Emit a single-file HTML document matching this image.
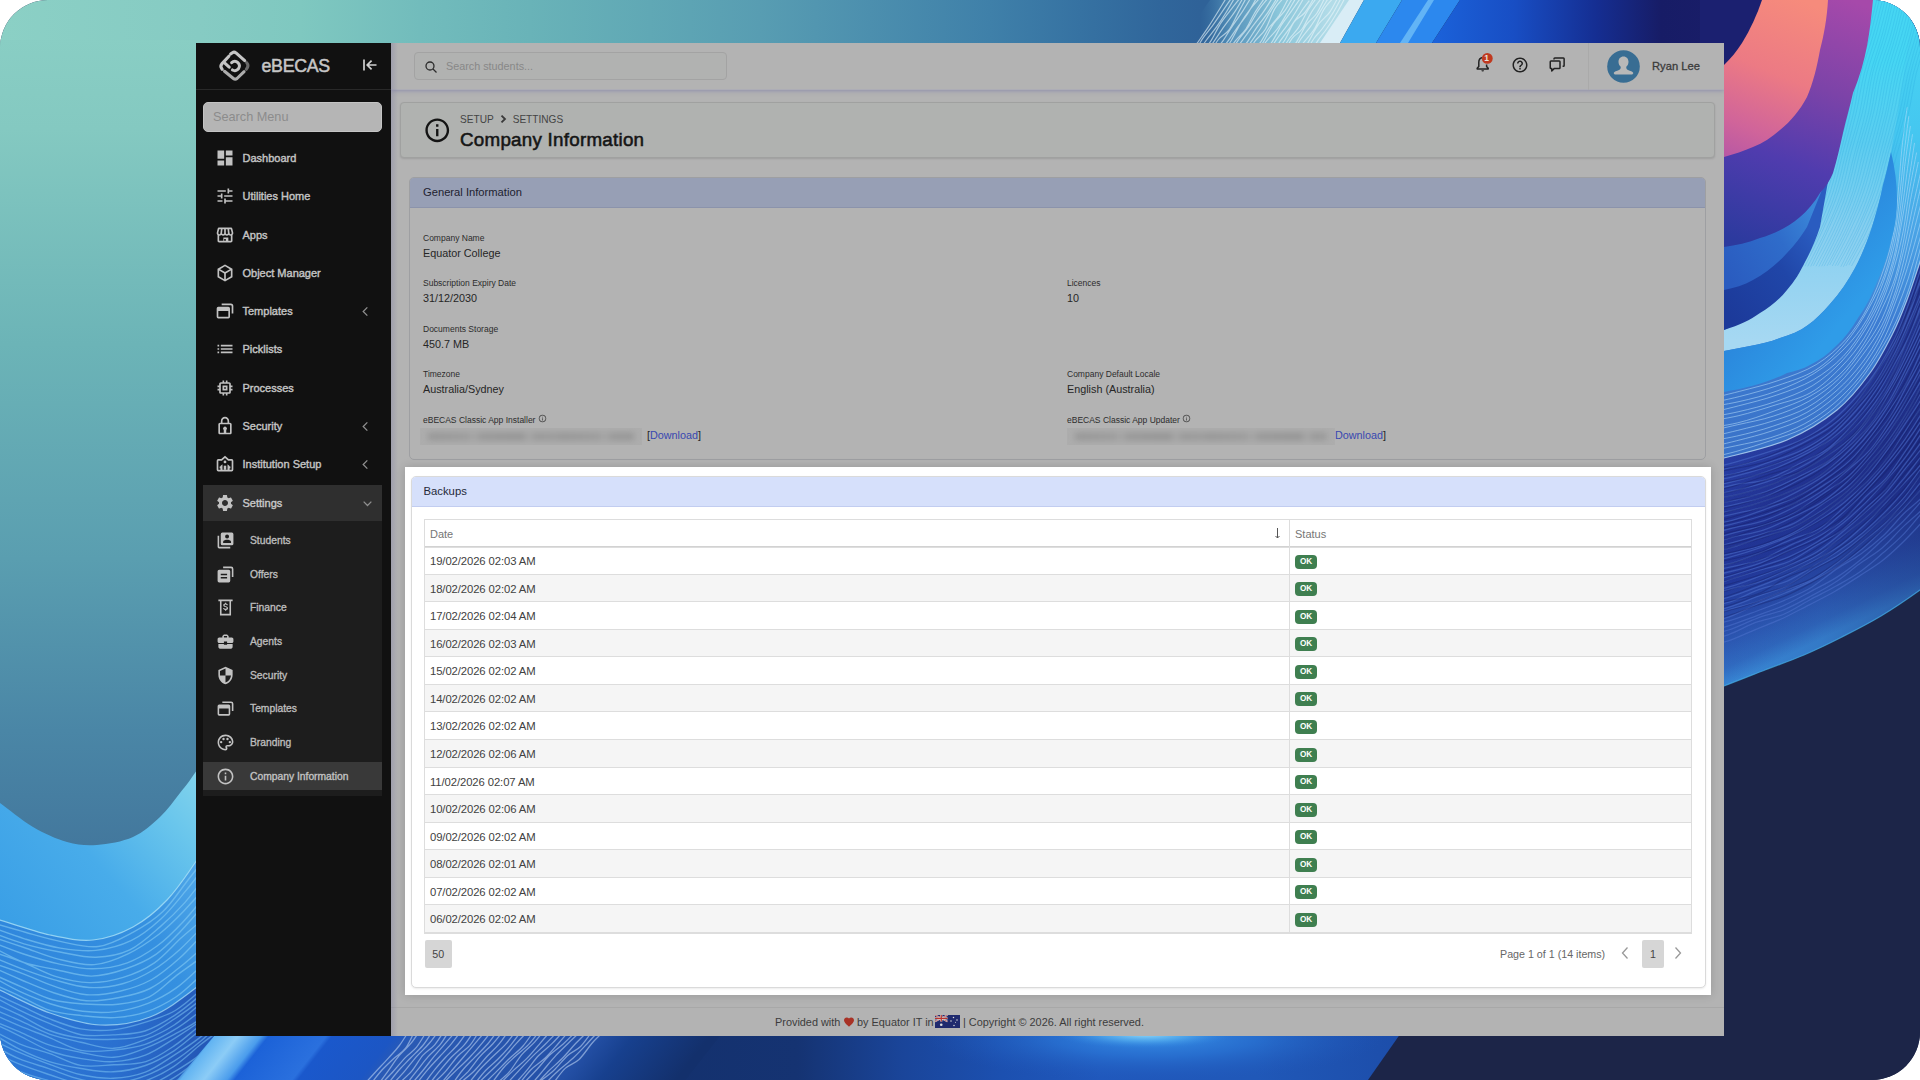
<!DOCTYPE html>
<html lang="en">
<head>
<meta charset="utf-8">
<title>eBECAS - Company Information</title>
<style>
*{box-sizing:border-box;margin:0;padding:0}
html,body{width:1920px;height:1080px;overflow:hidden;background:#fff}
body{font-family:"Liberation Sans",sans-serif;position:relative}
.wall{position:absolute;left:0;top:0;width:1920px;height:1080px;border-radius:48px;overflow:hidden}
.wall svg{position:absolute;left:0;top:0;display:block}
.win{position:absolute;left:196px;top:43px;width:1528px;height:993px;background:#b3b3b3;overflow:hidden}
/* ---------- sidebar ---------- */
.side{position:absolute;left:0;top:0;width:195px;height:993px;background:#111}
.brand{position:absolute;left:0;top:0;width:195px;height:47px;border-bottom:1px solid #292929}
.brand .name{position:absolute;left:65.500px;top:12px;font-size:17.800px;line-height:22px;color:#c6c6c6;letter-spacing:-.3px;font-weight:400;-webkit-text-stroke:.5px #c6c6c6}
.brand svg{position:absolute}
.smenu{position:absolute;left:7px;top:58.600px;width:179px;height:30px;border-radius:5px;background:#b5b5b5;border:1px solid #c4c4c4;color:#8c8c8c;font-size:12.700px;line-height:29px;padding-left:9px}
.mi{position:absolute;left:7px;width:179px;height:36px;color:#c4c4c4;font-size:11px;font-weight:400;-webkit-text-stroke:.4px #c4c4c4;line-height:37.500px;padding-left:39.500px;white-space:nowrap}
.mi svg{position:absolute;left:12.200px;top:7.800px;width:20px;height:20px;fill:#c2c2c2}
.mi .chev{position:absolute;left:auto;right:11px;top:13px;width:11px;height:11px;fill:none;stroke:#8f8f8f;stroke-width:1.4}
.sub{position:absolute;left:7px;top:478px;width:179px;height:275px;background:#1d1d1d}
.si{position:absolute;left:0;width:179px;height:28px;color:#bcbcbc;font-size:10.300px;font-weight:400;-webkit-text-stroke:.35px #bcbcbc;line-height:29px;padding-left:47px;white-space:nowrap}
.si svg{position:absolute;left:12.500px;top:4.500px;width:19px;height:19px;fill:#c2c2c2}
.si.act{background:#393939;color:#cbcbcb}
/* ---------- main ---------- */
.main{position:absolute;left:195px;top:0;width:1333px;height:993px;background:#b3b3b3}
.top{position:absolute;left:0;top:0;width:1333px;height:47px;background:#b3b3b3;box-shadow:0 1px 4px rgba(110,110,165,.5);border-bottom:1px solid #adadb6}
.sbox{position:absolute;left:23px;top:9px;width:313px;height:28px;border:1px solid #a3a3a3;border-radius:4px;background:#b1b2b1;color:#888;font-size:10.8px;line-height:26px;padding-left:31px}
.sbox svg{position:absolute;left:9px;top:7px}
.tsep{position:absolute;left:1196.5px;top:0;width:1px;height:47px;background:#aaa}
.uname{position:absolute;left:1261px;top:15px;font-size:11.2px;line-height:16px;color:#3b3b3b;-webkit-text-stroke:.3px #3b3b3b;white-space:nowrap}
.phead{position:absolute;left:9px;top:59px;width:1315px;height:56px;background:#b0b2b0;border:1px solid #a0a1a0;border-radius:4px;box-shadow:0 1px 2px rgba(0,0,0,.12)}
.crumb{position:absolute;left:59px;top:11px;font-size:10.1px;line-height:12px;color:#444;white-space:nowrap}
.crumb svg{display:inline-block;width:19px;height:8px;vertical-align:.300px}
.ptitle{position:absolute;left:59px;top:24.500px;font-size:18.800px;line-height:24px;font-weight:400;-webkit-text-stroke:.55px #151515;color:#151515;white-space:nowrap;letter-spacing:.25px}
.card1{position:absolute;left:18px;top:134px;width:1297px;height:283px;border:1px solid #9e9fa2;border-radius:5px;background:#b3b3b3;overflow:hidden}
.card1 .h{height:29.5px;background:#979fb5;border-bottom:1px solid #8b93ab;font-size:11.200px;line-height:28px;color:#1e2230;padding-left:13px}
.f{position:absolute;white-space:nowrap}
.f .l{display:block;font-size:8.500px;line-height:11px;color:#2c2c2c}
.f .v{display:block;font-size:10.8px;line-height:14px;color:#262626;margin-top:2px}
.f a{color:#3848b0;text-decoration:none}
.blur{display:inline-block;vertical-align:top;height:17px;margin-top:-.500px;background:#adadad;overflow:hidden;position:relative}
.blur b{position:absolute;left:8px;right:8px;top:5px;height:7px;filter:blur(3px);background:repeating-linear-gradient(90deg,#949494 0,#9a9a9a 40px,#a8a8a8 46px,#969696 52px,#929292 95px,#a9a9a9 101px,#969696 107px,#9a9a9a 131px)}
.hl{position:absolute;left:209px;top:424px;width:1306px;height:527.5px;background:#fff;box-shadow:0 0 9px rgba(0,0,0,.16)}
.card2{position:absolute;left:6px;top:9px;width:1295px;height:512px;border:1px solid #dadada;border-radius:5px;background:#fff;overflow:hidden;box-shadow:0 1px 2px rgba(0,0,0,.08)}
.card2 .h{height:30px;background:#d6e0fb;border-bottom:1px solid #c2cdf0;font-size:11.300px;line-height:28px;color:#252a3a;padding-left:11.5px}
.g{position:absolute;left:12px;top:42px;width:1268px;height:415px;border:1px solid #ddd;background:#fff;font-size:11.300px;letter-spacing:-.1px;color:#414141}
.r{position:absolute;left:0;width:1266px;border-bottom:1px solid #ddd;white-space:nowrap}
.r.o{background:#f5f5f5}
.r span{position:absolute;left:5px;top:0}
.r i{position:absolute;left:870px;top:50%;margin-top:-6px;width:22px;height:14px;border-radius:4px;background:#3f7f50;color:#fff;font-size:8.2px;font-weight:700;font-style:normal;line-height:14px;text-align:center}
.r.hd{color:#767676;font-size:11px;letter-spacing:0;border-bottom:1px solid #d2d2d2;box-shadow:0 1px 0 #dedede}
.vl{position:absolute;left:864px;top:0;width:1px;height:413px;background:#ddd}
.pg{position:absolute;top:463px;height:28px;font-size:10.7px;line-height:28px;color:#666;white-space:nowrap}
.pgb{position:absolute;top:463px;height:27.5px;border-radius:2px;background:#d6d6d6;font-size:10.7px;line-height:28px;color:#444;text-align:center}
.foot{position:absolute;left:0;top:964px;width:1333px;height:29px;border-top:1px solid #a8a8a8;font-size:10.9px;line-height:29px;color:#3c3c3c;white-space:nowrap}
.foot span{position:absolute;top:0}
.sshade{position:absolute;left:195px;top:0;width:7px;height:993px;background:linear-gradient(90deg,rgba(120,120,160,.34),rgba(120,120,160,0))}

</style>
</head>
<body>
<div class="wall">
<svg width="1920" height="1080" viewBox="0 0 1920 1080">
<defs>
<linearGradient id="gTop" gradientUnits="userSpaceOnUse" x1="0" y1="0" x2="1920" y2="0"><stop offset="0.0000" stop-color="#8bd0c5"/><stop offset="0.1042" stop-color="#86cbc3"/><stop offset="0.1562" stop-color="#7fc8c0"/><stop offset="0.2188" stop-color="#72bcbc"/><stop offset="0.2760" stop-color="#69b3b8"/><stop offset="0.3385" stop-color="#60a8b5"/><stop offset="0.3958" stop-color="#589db2"/><stop offset="0.4531" stop-color="#4c8fae"/><stop offset="0.5156" stop-color="#3f80a9"/><stop offset="0.5625" stop-color="#3672a2"/><stop offset="0.6042" stop-color="#30669b"/><stop offset="0.6250" stop-color="#2f6298"/><stop offset="1.0000" stop-color="#2f6298"/></linearGradient>
<linearGradient id="gLeft" gradientUnits="userSpaceOnUse" x1="0" y1="0" x2="0" y2="860">
<stop offset="0" stop-color="#8bd0c5"/><stop offset=".15" stop-color="#84c9c1"/><stop offset=".4" stop-color="#6cb4b7"/><stop offset=".65" stop-color="#5a9eb0"/><stop offset=".85" stop-color="#4a86a6"/><stop offset="1" stop-color="#42769c"/>
</linearGradient>
<linearGradient id="gW1" gradientUnits="userSpaceOnUse" x1="20" y1="940" x2="200" y2="780">
<stop offset="0" stop-color="#3a9fe6"/><stop offset=".45" stop-color="#48acea"/><stop offset=".8" stop-color="#6ac6ec"/><stop offset="1" stop-color="#80d2ec"/>
</linearGradient>
<linearGradient id="gW2" gradientUnits="userSpaceOnUse" x1="0" y1="1000" x2="200" y2="880">
<stop offset="0" stop-color="#2e84dc"/><stop offset=".7" stop-color="#3590e0"/><stop offset="1" stop-color="#4ea6e8"/>
</linearGradient>
<linearGradient id="gW3" gradientUnits="userSpaceOnUse" x1="0" y1="1000" x2="200" y2="1040">
<stop offset="0" stop-color="#2c78d6"/><stop offset=".6" stop-color="#2a70d0"/><stop offset="1" stop-color="#2458b8"/>
</linearGradient>
<linearGradient id="gSal" gradientUnits="userSpaceOnUse" x1="1800" y1="0" x2="1735" y2="160">
<stop offset="0" stop-color="#f68b7c"/><stop offset=".45" stop-color="#ec7a84"/><stop offset=".8" stop-color="#d0649a"/><stop offset="1" stop-color="#b858a4"/>
</linearGradient>
<linearGradient id="gPur" gradientUnits="userSpaceOnUse" x1="1850" y1="0" x2="1760" y2="250">
<stop offset="0" stop-color="#a649aa"/><stop offset=".35" stop-color="#7c43a8"/><stop offset=".65" stop-color="#503cae"/><stop offset="1" stop-color="#2c3a9e"/>
</linearGradient>
<linearGradient id="gCy" gradientUnits="userSpaceOnUse" x1="0" y1="0" x2="0" y2="460">
<stop offset="0" stop-color="#46d9f3"/><stop offset=".3" stop-color="#45c6f0"/><stop offset=".5" stop-color="#4aa4e6"/><stop offset=".7" stop-color="#3c7cd2"/><stop offset="1" stop-color="#3a72c8"/>
</linearGradient>
<linearGradient id="gRoy" gradientUnits="userSpaceOnUse" x1="1750" y1="420" x2="1850" y2="625">
<stop offset="0" stop-color="#2a42aa"/><stop offset=".4" stop-color="#213292"/><stop offset=".6" stop-color="#22389a"/><stop offset=".8" stop-color="#2a52ae"/><stop offset=".93" stop-color="#306ac0"/><stop offset="1" stop-color="#3886d4"/>
</linearGradient>
<linearGradient id="gRoyD" gradientUnits="userSpaceOnUse" x1="1724" y1="0" x2="1920" y2="0"><stop offset="0" stop-color="#161e66" stop-opacity="0"/><stop offset=".5" stop-color="#161e66" stop-opacity=".12"/><stop offset="1" stop-color="#161e66" stop-opacity=".4"/></linearGradient>
<linearGradient id="gBot" gradientUnits="userSpaceOnUse" x1="0" y1="0" x2="1920" y2="0">
<stop offset="0" stop-color="#2a7ad8"/><stop offset=".108" stop-color="#2a66c4"/><stop offset=".112" stop-color="#62b4f2"/><stop offset=".124" stop-color="#8cccf6"/><stop offset=".136" stop-color="#4a9cec"/><stop offset=".14" stop-color="#1c62d8"/><stop offset=".17" stop-color="#2a70de"/><stop offset=".173" stop-color="#1a58cc"/><stop offset=".205" stop-color="#1c56c4"/><stop offset=".215" stop-color="#2a5ab4"/><stop offset=".31" stop-color="#2450a6"/><stop offset=".33" stop-color="#17408e"/><stop offset=".37" stop-color="#13306c"/><stop offset=".42" stop-color="#14306c"/><stop offset=".455" stop-color="#17387c"/><stop offset=".495" stop-color="#1a469c"/><stop offset=".53" stop-color="#1c50b0"/><stop offset=".565" stop-color="#2468cc"/><stop offset=".60" stop-color="#2c80de"/><stop offset=".625" stop-color="#2262c4"/><stop offset=".68" stop-color="#1d50ae"/><stop offset=".73" stop-color="#1a4296"/><stop offset="1" stop-color="#1a4296"/>
</linearGradient>
<linearGradient id="gTop2" gradientUnits="userSpaceOnUse" x1="1432" y1="0" x2="1760" y2="0">
<stop offset="0" stop-color="#1b62da"/><stop offset=".25" stop-color="#184ec4"/><stop offset=".5" stop-color="#152e92"/><stop offset=".7" stop-color="#171c66"/><stop offset=".85" stop-color="#191d68"/><stop offset="1" stop-color="#1b2070"/>
</linearGradient>
<linearGradient id="gLB" gradientUnits="userSpaceOnUse" x1="0" y1="60" x2="0" y2="340">
<stop offset="0" stop-color="#46d6f3"/><stop offset=".3" stop-color="#5ccdf0"/><stop offset=".6" stop-color="#86cff0"/><stop offset="1" stop-color="#a6d8f2"/>
</linearGradient>
<linearGradient id="gWd" gradientUnits="userSpaceOnUse" x1="1800" y1="250" x2="1860" y2="300">
<stop offset="0" stop-color="#2a86dc"/><stop offset="1" stop-color="#2f9ce8"/>
</linearGradient>
<radialGradient id="gGlow" gradientUnits="userSpaceOnUse" cx="1145" cy="1034" r="90" gradientTransform="translate(0,1034) scale(1,.16) translate(0,-1034)">
<stop offset="0" stop-color="#9be0fa" stop-opacity=".95"/><stop offset=".5" stop-color="#5ab4f0" stop-opacity=".6"/><stop offset="1" stop-color="#2c80de" stop-opacity="0"/>
</radialGradient>
<linearGradient id="gMB" gradientUnits="userSpaceOnUse" x1="1724" y1="270" x2="1815" y2="215"><stop offset="0" stop-color="#2a5cc0"/><stop offset=".6" stop-color="#2f6cca"/><stop offset="1" stop-color="#3a86d8"/></linearGradient>
<linearGradient id="gDB" gradientUnits="userSpaceOnUse" x1="1724" y1="310" x2="1820" y2="240"><stop offset="0" stop-color="#1c3a9a"/><stop offset=".6" stop-color="#2046a8"/><stop offset="1" stop-color="#2a5cc0"/></linearGradient>
<linearGradient id="gBot2" gradientUnits="userSpaceOnUse" x1="600" y1="0" x2="1420" y2="0"><stop offset="0" stop-color="#13306c"/><stop offset=".24" stop-color="#153372"/><stop offset=".37" stop-color="#1a459a"/><stop offset=".49" stop-color="#1c50b0"/><stop offset=".61" stop-color="#2058bc"/><stop offset=".8" stop-color="#2058b8"/><stop offset="1" stop-color="#1c4ca8"/></linearGradient>
<radialGradient id="gGlow2" gradientUnits="userSpaceOnUse" cx="1155" cy="1036" r="230" gradientTransform="translate(0,1036) scale(1,.2) translate(0,-1036)"><stop offset="0" stop-color="#3a94ea" stop-opacity=".95"/><stop offset=".45" stop-color="#2c7cdc" stop-opacity=".6"/><stop offset="1" stop-color="#2058bc" stop-opacity="0"/></radialGradient>
</defs>
<rect width="1920" height="1080" fill="#1c2548"/>
<rect x="0" y="0" width="1300" height="120" fill="url(#gTop)"/>
<rect x="0" y="40" width="260" height="1040" fill="url(#gLeft)"/>
<rect x="620" y="1030" width="900" height="50" fill="url(#gBot2)"/>
<rect x="860" y="985" width="600" height="100" fill="url(#gGlow2)"/>
<rect x="100" y="1030" width="620" height="50" fill="url(#gBot)" transform="translate(0,1036) skewX(-38) translate(0,-1036)"/>
<path d="M409.9,1029.4C408.1,1032.1 403.0,1040.7 399.4,1045.5C395.9,1050.3 392.2,1053.8 388.4,1058.1C384.5,1062.4 380.1,1067.0 376.2,1071.2C372.4,1075.3 367.3,1081.0 365.5,1083.0M415.3,1029.6C413.7,1032.7 409.2,1043.4 405.6,1048.2C402.1,1052.9 398.0,1054.6 394.1,1058.2C390.2,1061.8 386.1,1065.6 382.2,1069.8C378.4,1074.0 373.0,1081.1 371.1,1083.4M420.6,1029.2C419.1,1031.5 414.7,1038.8 411.1,1043.2C407.6,1047.6 402.9,1051.1 399.1,1055.7C395.3,1060.3 392.0,1065.7 388.4,1070.6C384.8,1075.6 379.4,1082.8 377.5,1085.3M426.9,1030.8C425.2,1033.5 420.1,1042.7 416.6,1047.1C413.1,1051.5 409.7,1053.1 405.8,1057.1C402.0,1061.1 397.5,1066.7 393.6,1071.0C389.6,1075.4 384.0,1081.1 382.1,1083.1M433.2,1030.1C431.5,1032.7 426.5,1040.9 422.8,1045.5C419.0,1050.1 414.7,1053.7 410.8,1057.7C407.0,1061.7 403.2,1065.4 399.5,1069.5C395.8,1073.7 390.4,1080.6 388.6,1082.8M439.6,1029.3C437.9,1031.6 433.3,1038.6 429.5,1043.0C425.8,1047.5 421.3,1051.3 417.2,1055.9C413.1,1060.5 408.7,1066.3 404.9,1070.8C401.1,1075.2 396.1,1080.5 394.3,1082.5M445.3,1029.0C443.5,1031.7 438.4,1040.4 434.7,1044.8C431.0,1049.1 426.8,1050.8 423.0,1055.2C419.2,1059.6 415.6,1066.6 411.7,1071.2C407.8,1075.8 401.6,1080.8 399.6,1082.8M450.2,1028.4C448.7,1031.0 444.4,1039.2 440.7,1043.9C437.0,1048.6 432.0,1052.3 428.2,1056.7C424.3,1061.1 421.3,1065.3 417.4,1070.2C413.6,1075.0 407.2,1083.0 405.2,1085.6M457.0,1030.1C455.2,1032.1 450.0,1038.0 446.2,1042.4C442.3,1046.9 437.9,1052.0 433.9,1056.7C430.0,1061.5 426.3,1066.4 422.5,1071.0C418.7,1075.6 413.1,1082.1 411.2,1084.3M462.9,1028.8C461.0,1031.3 455.3,1039.0 451.5,1043.7C447.6,1048.3 443.7,1052.3 439.8,1056.5C435.9,1060.8 432.1,1064.5 428.2,1069.1C424.3,1073.6 418.3,1081.4 416.3,1083.9M468.8,1029.2C467.0,1031.7 462.2,1039.3 458.3,1044.0C454.4,1048.7 449.5,1053.1 445.6,1057.3C441.6,1061.6 438.5,1065.0 434.7,1069.7C430.9,1074.5 424.7,1083.0 422.7,1085.7M475.2,1029.0C473.5,1031.6 468.6,1039.7 464.7,1044.4C460.8,1049.1 455.8,1052.6 451.6,1057.0C447.5,1061.4 443.9,1065.8 439.9,1070.6C436.0,1075.4 429.9,1083.1 427.9,1085.5M480.4,1028.7C478.7,1031.5 473.9,1040.6 470.1,1045.1C466.4,1049.6 462.0,1051.7 457.9,1056.0C453.9,1060.3 449.8,1066.7 445.8,1071.1C441.9,1075.5 436.2,1080.6 434.2,1082.5M486.7,1029.7C484.8,1032.0 479.0,1038.9 475.1,1043.4C471.3,1047.9 467.8,1052.0 463.7,1056.7C459.7,1061.4 454.9,1066.8 450.9,1071.6C446.9,1076.3 441.5,1082.9 439.6,1085.2M492.3,1029.9C490.6,1032.2 485.9,1038.7 481.9,1043.4C478.0,1048.2 472.9,1054.0 468.8,1058.3C464.8,1062.5 461.6,1065.1 457.4,1069.1C453.3,1073.1 446.2,1080.1 444.0,1082.3M498.2,1029.8C496.4,1032.2 491.6,1039.4 487.7,1044.0C483.7,1048.6 478.9,1053.0 474.7,1057.4C470.4,1061.8 466.3,1065.5 462.3,1070.5C458.2,1075.4 452.3,1084.4 450.3,1087.2M504.8,1029.0C502.8,1031.4 497.1,1039.1 492.9,1043.7C488.8,1048.2 484.2,1051.7 480.1,1056.4C476.0,1061.0 472.1,1067.1 468.1,1071.6C464.0,1076.0 458.0,1081.1 456.0,1083.1M510.0,1028.6C508.2,1031.1 503.0,1039.3 499.1,1043.9C495.3,1048.6 491.0,1052.0 486.9,1056.5C482.8,1061.0 478.6,1066.6 474.4,1070.8C470.2,1075.0 463.9,1079.8 461.8,1081.6M516.0,1030.9C514.2,1033.1 509.4,1040.1 505.5,1044.4C501.6,1048.7 496.9,1052.5 492.6,1056.7C488.2,1061.0 483.7,1065.1 479.6,1069.7C475.5,1074.3 469.8,1082.0 467.8,1084.4M522.3,1029.6C520.5,1032.1 515.2,1039.6 511.1,1044.6C507.0,1049.5 502.0,1055.0 497.8,1059.3C493.5,1063.6 489.6,1066.2 485.6,1070.5C481.5,1074.8 475.6,1082.8 473.6,1085.2M528.3,1030.6C526.3,1032.8 520.6,1038.7 516.4,1043.4C512.1,1048.1 507.4,1054.0 503.0,1058.7C498.7,1063.3 494.6,1067.3 490.5,1071.3C486.4,1075.3 480.5,1080.9 478.5,1082.8M534.3,1030.3C532.4,1033.0 526.9,1041.6 522.8,1046.3C518.8,1050.9 514.1,1054.1 509.8,1058.3C505.4,1062.5 500.9,1067.2 496.7,1071.4C492.5,1075.6 486.5,1081.4 484.5,1083.4M540.3,1029.9C538.3,1032.4 532.7,1040.2 528.5,1044.6C524.4,1049.0 519.5,1052.3 515.3,1056.3C511.0,1060.3 507.1,1063.5 502.9,1068.5C498.7,1073.4 492.0,1083.0 489.8,1085.9M545.3,1029.2C543.5,1031.3 538.4,1038.0 534.6,1042.1C530.7,1046.3 526.5,1049.1 522.2,1054.1C517.9,1059.1 513.2,1067.4 508.9,1072.4C504.5,1077.3 498.2,1081.8 496.0,1083.7M552.4,1028.9C550.4,1031.2 544.7,1037.9 540.5,1042.8C536.3,1047.7 531.4,1053.8 526.9,1058.4C522.5,1062.9 517.9,1066.1 513.7,1070.1C509.4,1074.1 503.4,1080.3 501.4,1082.4M558.6,1030.4C556.4,1032.7 549.9,1039.7 545.5,1044.0C541.2,1048.4 536.8,1052.1 532.5,1056.4C528.3,1060.7 524.0,1065.2 519.8,1069.6C515.6,1074.1 509.4,1080.9 507.3,1083.2M564.5,1029.9C562.5,1032.2 556.6,1039.1 552.2,1043.4C547.9,1047.7 542.8,1051.1 538.4,1055.8C534.0,1060.5 529.9,1066.7 525.7,1071.6C521.5,1076.6 515.4,1083.2 513.4,1085.5M570.2,1029.7C568.2,1032.1 562.1,1039.3 557.9,1044.0C553.7,1048.8 549.4,1054.0 544.9,1058.3C540.4,1062.6 535.3,1065.3 530.9,1069.7C526.6,1074.0 520.8,1081.9 518.8,1084.4M576.0,1031.4C573.9,1033.5 567.8,1039.8 563.5,1043.7C559.2,1047.6 554.4,1050.6 550.0,1054.8C545.6,1059.0 541.6,1064.3 537.3,1069.0C532.9,1073.7 526.0,1080.8 523.7,1083.1M582.3,1029.9C580.2,1031.9 573.9,1037.8 569.5,1042.0C565.1,1046.3 560.4,1050.6 556.0,1055.4C551.5,1060.2 547.2,1065.7 542.8,1070.9C538.4,1076.1 531.7,1083.9 529.5,1086.5M588.2,1030.7C586.1,1032.9 579.8,1039.2 575.4,1043.8C571.1,1048.4 566.7,1053.8 562.1,1058.5C557.5,1063.1 552.4,1067.3 547.9,1071.7C543.5,1076.2 537.5,1082.9 535.4,1085.2M594.1,1028.5C591.9,1031.5 585.2,1041.7 580.8,1046.2C576.4,1050.7 572.1,1051.5 567.7,1055.4C563.2,1059.4 558.8,1065.7 554.2,1070.0C549.6,1074.3 542.5,1079.4 540.2,1081.3M599.4,1030.3C597.3,1032.6 591.4,1039.1 587.1,1043.7C582.8,1048.3 578.1,1053.5 573.5,1057.8C568.8,1062.2 563.6,1066.0 559.1,1070.1C554.5,1074.2 548.3,1080.5 546.2,1082.5M605.7,1029.9C603.6,1031.9 597.3,1037.3 592.9,1042.3C588.4,1047.2 583.6,1055.2 579.0,1059.5C574.4,1063.9 569.6,1064.2 565.2,1068.4C560.7,1072.6 554.4,1082.0 552.2,1084.7" fill="none" stroke="#b4cdf0" stroke-width="1.3" opacity=".62"/>
<clipPath id="cpL"><path d="M-10,600 L250,600 L250,1000 L214,1036 L177,1080 L-10,1080Z"/></clipPath>
<g clip-path="url(#cpL)">
<path d="M-10.0,797.0C-8.3,798.0 -7.2,798.0 0.0,803.0C7.2,808.0 21.8,820.5 33.0,827.0C44.2,833.5 56.3,839.0 67.0,842.0C77.7,845.0 86.0,845.8 97.0,845.0C108.0,844.2 122.5,841.7 133.0,837.0C143.5,832.3 152.2,824.3 160.0,817.0C167.8,809.7 173.8,800.8 180.0,793.0C186.2,785.2 185.3,787.2 197.0,770.0C208.7,752.8 241.2,703.3 250.0,690.0L250,1080L-10,1080Z" fill="url(#gW1)"/>
<path d="M-10.0,917.0C-8.3,917.5 -10.0,917.0 0.0,920.0C10.0,923.0 34.5,931.7 50.0,935.0C65.5,938.3 79.2,941.3 93.0,940.0C106.8,938.7 120.7,933.7 133.0,927.0C145.3,920.3 156.3,911.2 167.0,900.0C177.7,888.8 183.2,880.0 197.0,860.0C210.8,840.0 241.2,793.3 250.0,780.0L250,1080L-10,1080Z" fill="url(#gW2)"/>
<path d="M-10.0,917.0C-8.3,917.5 -10.0,917.0 0.0,920.0C10.0,923.0 34.5,931.7 50.0,935.0C65.5,938.3 79.2,941.3 93.0,940.0C106.8,938.7 120.7,933.7 133.0,927.0C145.3,920.3 156.3,911.2 167.0,900.0C177.7,888.8 183.2,880.0 197.0,860.0C210.8,840.0 241.2,793.3 250.0,780.0" fill="none" stroke="#a8e0f6" stroke-width="1.2" opacity=".8"/>
<path d="M-10.0,922.1C-4.1,923.8 13.4,929.0 25.3,932.2C37.1,935.5 49.0,939.2 61.2,941.6C73.3,944.0 86.3,948.1 98.2,946.5C110.2,945.0 122.1,938.1 132.9,932.3C143.7,926.5 154.0,920.0 162.9,911.5C171.9,903.1 179.1,891.4 186.7,881.7C194.2,872.1 201.1,863.5 208.1,853.5C215.1,843.4 221.8,832.0 228.6,821.4C235.5,810.8 245.9,794.9 249.3,789.7M-10.7,926.5C-4.8,928.5 12.6,935.2 24.5,938.8C36.3,942.4 48.5,946.2 60.4,948.1C72.4,950.0 84.1,951.7 95.9,950.4C107.8,949.1 120.7,945.6 131.5,940.4C142.4,935.2 151.9,927.2 160.9,919.0C169.8,910.9 177.5,900.9 185.3,891.4C193.2,881.9 200.7,871.5 208.0,862.0C215.2,852.4 221.9,843.9 228.9,834.1C235.8,824.2 246.3,808.0 249.8,802.8M-10.0,931.8C-4.3,933.8 12.4,940.5 24.0,943.8C35.7,947.2 48.0,949.8 59.9,952.0C71.9,954.2 84.1,957.6 95.8,957.3C107.4,956.9 119.0,955.0 129.8,949.9C140.5,944.8 151.2,934.5 160.3,926.6C169.5,918.7 177.0,911.3 184.8,902.6C192.5,893.8 199.6,883.7 206.9,874.1C214.2,864.5 221.3,854.9 228.6,844.9C235.8,834.8 246.9,819.0 250.5,813.9M-9.9,936.2C-4.3,938.1 12.6,943.7 24.0,947.5C35.4,951.4 46.6,956.3 58.3,959.1C70.0,962.0 82.8,965.5 94.4,964.6C106.0,963.7 117.2,958.9 128.0,953.8C138.7,948.7 149.7,941.2 159.0,934.2C168.2,927.1 175.6,919.6 183.6,911.3C191.6,903.0 199.5,893.9 206.9,884.5C214.3,875.0 221.1,864.1 228.2,854.7C235.4,845.3 246.3,832.6 249.9,828.2M-10.2,941.3C-4.5,943.5 12.4,950.3 23.6,954.0C34.9,957.7 46.0,961.1 57.5,963.6C69.0,966.0 81.1,969.0 92.7,968.8C104.4,968.7 116.6,966.6 127.3,962.8C138.1,959.0 148.1,952.6 157.4,945.8C166.6,939.0 174.7,930.7 182.7,922.2C190.8,913.6 198.4,904.0 205.9,894.7C213.4,885.4 220.4,876.4 227.6,866.6C234.9,856.8 245.8,840.8 249.4,835.7M-10.1,945.6C-4.6,948.4 12.0,958.1 23.1,962.1C34.2,966.1 45.0,967.3 56.4,969.7C67.7,972.0 80.0,976.2 91.5,976.1C102.9,975.9 114.5,972.7 125.3,969.0C136.1,965.3 146.9,960.6 156.3,954.1C165.7,947.7 173.4,938.8 181.6,930.3C189.7,921.8 197.6,912.1 205.3,903.1C213.1,894.1 220.4,885.1 227.9,876.2C235.4,867.4 246.6,854.5 250.3,850.1M-10.0,951.0C-4.6,952.8 11.6,958.0 22.5,962.2C33.4,966.5 44.2,973.0 55.3,976.4C66.4,979.8 77.9,982.4 89.2,982.6C100.6,982.8 112.4,980.7 123.2,977.4C134.1,974.1 144.7,969.4 154.4,962.9C164.0,956.3 172.6,945.8 181.0,938.1C189.5,930.3 197.5,924.8 205.2,916.4C213.0,908.1 220.1,897.3 227.5,888.0C235.0,878.7 246.2,865.0 249.9,860.4M-9.6,956.0C-4.3,958.2 11.4,964.9 22.1,968.9C32.8,972.9 43.4,976.8 54.6,979.9C65.7,983.0 77.8,986.9 89.1,987.5C100.4,988.1 112.0,986.6 122.6,983.7C133.3,980.8 143.5,975.8 153.1,970.0C162.6,964.3 171.4,957.0 179.9,949.4C188.4,941.9 196.3,933.2 204.1,924.7C211.9,916.2 219.0,907.1 226.8,898.4C234.5,889.7 246.6,876.8 250.6,872.5M-10.4,962.1C-5.0,963.9 11.4,969.3 22.1,973.4C32.8,977.4 43.0,982.7 53.8,986.2C64.5,989.8 75.5,993.9 86.7,994.7C97.8,995.5 109.9,993.6 120.8,991.0C131.6,988.5 142.0,984.8 151.7,979.5C161.4,974.1 170.3,966.4 178.9,958.8C187.5,951.2 195.2,942.1 203.3,933.9C211.4,925.8 219.7,918.0 227.5,909.8C235.3,901.7 246.3,889.2 250.1,885.0M-10.2,966.0C-4.9,968.4 10.9,975.5 21.4,980.0C31.9,984.4 42.0,989.1 52.9,992.5C63.7,996.0 75.3,999.9 86.3,1000.7C97.4,1001.5 108.7,999.6 119.4,997.5C130.0,995.5 140.3,993.4 150.1,988.5C160.0,983.7 169.7,975.3 178.5,968.3C187.4,961.3 195.2,954.3 203.3,946.7C211.4,939.0 219.3,930.6 227.1,922.6C234.8,914.6 246.0,902.6 249.8,898.6M-10.4,972.7C-5.2,975.0 10.4,982.1 20.9,986.6C31.4,991.1 42.1,996.9 52.7,999.8C63.2,1002.7 73.3,1003.2 84.1,1004.0C95.0,1004.7 107.1,1005.4 118.0,1004.2C128.8,1003.0 139.5,1001.7 149.3,996.9C159.1,992.1 167.8,982.2 176.7,975.4C185.5,968.6 194.3,963.2 202.6,956.1C210.9,949.0 218.6,940.8 226.4,932.6C234.3,924.4 245.8,911.0 249.7,906.7M-10.1,975.4C-5.1,978.1 9.5,986.6 19.6,991.4C29.8,996.1 40.5,1000.7 51.0,1004.0C61.6,1007.3 72.0,1010.0 82.8,1011.3C93.6,1012.6 104.9,1012.9 115.8,1011.6C126.6,1010.3 137.9,1007.3 148.0,1003.4C158.1,999.4 167.3,994.3 176.4,987.9C185.6,981.4 194.4,972.1 202.7,964.7C211.1,957.3 218.7,951.2 226.6,943.5C234.4,935.8 246.1,922.7 250.0,918.5M-10.2,982.5C-5.2,984.8 9.7,991.4 19.7,996.1C29.8,1000.8 39.7,1007.2 50.0,1010.4C60.4,1013.7 71.1,1014.4 81.8,1015.6C92.5,1016.7 103.7,1018.1 114.3,1017.6C124.9,1017.0 135.2,1015.6 145.4,1012.2C155.7,1008.8 166.6,1003.1 175.9,997.0C185.1,991.0 192.6,982.6 201.0,975.6C209.4,968.6 218.2,962.1 226.4,954.9C234.6,947.6 246.1,935.8 250.0,931.9" fill="none" stroke="#84ccf4" stroke-width="1.4" opacity=".6"/>
<path d="M-10.0,985.0C-8.3,985.8 -10.0,985.3 0.0,990.0C10.0,994.7 33.3,1007.2 50.0,1013.0C66.7,1018.8 83.3,1024.3 100.0,1025.0C116.7,1025.7 133.8,1023.3 150.0,1017.0C166.2,1010.7 180.3,999.8 197.0,987.0C213.7,974.2 241.2,947.8 250.0,940.0L250,1080L-10,1080Z" fill="url(#gW3)"/>
<path d="M-10.0,985.0C-8.3,985.8 -10.0,985.3 0.0,990.0C10.0,994.7 33.3,1007.2 50.0,1013.0C66.7,1018.8 83.3,1024.3 100.0,1025.0C116.7,1025.7 133.8,1023.3 150.0,1017.0C166.2,1010.7 180.3,999.8 197.0,987.0C213.7,974.2 241.2,947.8 250.0,940.0" fill="none" stroke="#a8dcf6" stroke-width="1.2" opacity=".75"/>
<path d="M-10.0,991.4C-5.0,993.7 9.8,1000.6 19.6,1005.2C29.5,1009.7 39.0,1014.7 49.1,1018.7C59.3,1022.6 70.0,1027.0 80.7,1028.9C91.3,1030.8 102.2,1031.0 113.1,1029.9C123.9,1028.8 135.3,1025.5 145.6,1022.2C156.0,1019.0 166.1,1015.8 175.3,1010.5C184.5,1005.1 192.4,997.7 200.8,990.0C209.2,982.3 217.7,971.9 225.9,964.4C234.1,957.0 246.1,948.5 250.1,945.3M-10.0,994.6C-5.1,997.2 9.4,1005.2 19.4,1010.1C29.3,1014.9 39.7,1019.6 50.0,1023.7C60.2,1027.8 70.4,1032.8 80.9,1034.7C91.5,1036.5 102.6,1035.5 113.3,1034.9C124.0,1034.3 134.7,1034.3 145.0,1031.0C155.2,1027.7 165.6,1021.2 175.0,1015.1C184.3,1009.0 192.7,1001.6 201.2,994.5C209.6,987.5 217.7,979.9 225.8,972.6C233.9,965.4 245.9,954.5 249.9,950.9M-9.5,1002.0C-4.6,1004.2 9.6,1010.2 19.4,1015.0C29.2,1019.7 39.1,1026.7 49.3,1030.5C59.6,1034.4 70.4,1036.7 81.1,1038.2C91.8,1039.7 102.6,1039.8 113.4,1039.3C124.1,1038.8 135.4,1038.8 145.6,1035.4C155.7,1032.1 165.2,1025.0 174.4,1019.0C183.6,1013.1 192.3,1006.7 200.8,999.9C209.2,993.0 217.0,985.1 225.1,978.0C233.3,971.0 245.6,960.8 249.7,957.4M-10.3,1007.5C-5.2,1009.7 10.1,1016.2 20.0,1020.7C30.0,1025.1 39.2,1030.5 49.4,1034.1C59.5,1037.7 70.2,1039.8 80.9,1042.2C91.6,1044.6 102.9,1048.8 113.7,1048.3C124.4,1047.9 135.4,1043.3 145.5,1039.4C155.5,1035.6 165.0,1031.0 174.2,1025.0C183.3,1019.1 191.7,1010.8 200.4,1003.7C209.0,996.7 217.8,989.3 226.1,982.6C234.5,975.9 246.3,966.8 250.4,963.6M-9.9,1012.9C-4.9,1015.1 10.3,1022.1 20.2,1026.2C30.1,1030.3 39.3,1033.5 49.4,1037.6C59.5,1041.6 70.2,1048.4 81.0,1050.4C91.7,1052.5 103.1,1051.1 113.8,1050.1C124.5,1049.1 135.1,1047.8 145.2,1044.4C155.3,1041.0 165.3,1035.3 174.6,1029.7C183.9,1024.1 192.3,1017.5 200.8,1010.7C209.3,1004.0 217.3,996.3 225.5,989.1C233.7,981.8 246.0,970.8 250.1,967.1M-9.8,1019.9C-4.9,1021.9 9.9,1027.7 19.7,1031.9C29.5,1036.1 38.9,1041.6 49.0,1044.9C59.1,1048.3 69.5,1050.2 80.3,1052.2C91.0,1054.3 102.9,1058.0 113.8,1057.3C124.6,1056.7 135.3,1052.0 145.4,1048.2C155.5,1044.4 165.0,1039.4 174.3,1034.4C183.5,1029.4 192.4,1025.2 200.9,1018.4C209.5,1011.6 217.6,1001.2 225.7,993.6C233.8,985.9 245.6,976.1 249.6,972.6M-10.1,1021.8C-5.1,1024.1 9.5,1031.0 19.5,1035.8C29.6,1040.7 39.8,1047.2 50.1,1051.0C60.4,1054.8 70.8,1056.9 81.4,1058.6C91.9,1060.4 103.0,1062.2 113.6,1061.6C124.3,1061.0 135.3,1058.9 145.3,1055.1C155.4,1051.3 164.6,1044.5 173.9,1038.8C183.2,1033.1 192.3,1027.1 200.9,1020.8C209.6,1014.5 217.6,1008.4 225.7,1001.1C233.7,993.8 245.4,981.2 249.4,977.2M-9.9,1029.1C-5.1,1031.5 9.4,1039.7 19.4,1043.8C29.3,1047.9 39.6,1050.0 49.8,1053.6C60.0,1057.2 70.0,1063.6 80.6,1065.4C91.3,1067.3 102.7,1065.4 113.6,1064.8C124.5,1064.1 135.7,1064.8 145.9,1061.6C156.1,1058.3 165.7,1051.5 174.8,1045.4C183.9,1039.3 191.9,1031.7 200.5,1025.0C209.1,1018.3 218.1,1012.1 226.5,1005.1C234.8,998.1 246.6,986.5 250.6,982.8M-9.9,1032.1C-5.1,1034.9 9.5,1044.2 19.4,1049.2C29.2,1054.1 39.0,1058.4 49.3,1061.6C59.6,1064.9 70.4,1066.8 81.1,1068.5C91.8,1070.2 102.5,1072.3 113.2,1071.8C124.0,1071.3 135.2,1069.0 145.4,1065.5C155.5,1062.0 164.8,1056.6 174.0,1050.8C183.1,1044.9 191.6,1036.7 200.2,1030.2C208.7,1023.7 217.3,1018.6 225.5,1011.7C233.7,1004.9 245.5,992.9 249.4,989.1M-10.2,1038.4C-5.2,1040.8 9.7,1048.4 19.8,1052.7C29.9,1057.1 40.1,1061.0 50.3,1064.7C60.5,1068.4 70.7,1072.5 81.1,1074.8C91.6,1077.0 102.4,1078.7 113.1,1078.3C123.8,1077.9 135.1,1076.0 145.3,1072.1C155.5,1068.3 165.0,1061.0 174.2,1055.1C183.4,1049.3 191.8,1043.8 200.4,1037.1C209.0,1030.4 217.6,1022.4 225.8,1015.0C234.1,1007.6 246.0,996.2 250.0,992.5M-9.8,1043.7C-5.0,1046.2 8.9,1054.4 18.9,1058.7C28.9,1062.9 39.9,1065.6 50.2,1069.1C60.5,1072.5 70.1,1077.0 80.6,1079.4C91.1,1081.8 102.2,1083.9 113.0,1083.3C123.7,1082.7 134.8,1079.6 145.0,1075.8C155.3,1072.1 165.1,1066.6 174.4,1060.8C183.6,1055.0 192.1,1048.1 200.6,1041.2C209.0,1034.3 216.7,1026.2 225.0,1019.3C233.4,1012.3 246.4,1002.9 250.7,999.6M-9.9,1050.4C-5.0,1052.7 9.5,1060.1 19.6,1064.2C29.7,1068.3 40.3,1071.6 50.5,1075.0C60.6,1078.3 70.0,1082.0 80.4,1084.4C90.9,1086.7 102.0,1089.6 112.9,1089.0C123.8,1088.5 135.5,1084.6 145.6,1080.8C155.7,1077.1 164.4,1072.7 173.6,1066.6C182.8,1060.5 192.2,1051.2 200.9,1044.3C209.5,1037.5 217.4,1032.3 225.6,1025.6C233.9,1018.9 246.2,1007.7 250.4,1004.2M-10.1,1054.1C-5.2,1057.0 9.2,1066.7 19.2,1071.2C29.2,1075.7 39.9,1078.1 50.1,1081.0C60.4,1083.9 70.2,1086.5 80.7,1088.6C91.2,1090.6 102.5,1093.6 113.2,1093.4C124.0,1093.2 135.2,1090.7 145.2,1087.2C155.3,1083.7 164.5,1077.7 173.7,1072.2C182.8,1066.8 191.6,1061.3 200.3,1054.6C209.0,1047.9 217.8,1039.4 226.1,1032.1C234.3,1024.8 245.8,1014.4 249.7,1010.8M-10.2,1060.5C-5.3,1062.7 9.5,1069.3 19.5,1073.7C29.6,1078.0 39.8,1083.0 50.1,1086.7C60.3,1090.4 70.6,1094.1 81.1,1095.9C91.6,1097.7 102.4,1098.2 113.1,1097.6C123.8,1096.9 135.0,1095.2 145.1,1091.9C155.3,1088.6 165.0,1083.2 174.1,1077.6C183.2,1072.0 191.3,1065.2 199.8,1058.4C208.2,1051.7 216.5,1044.3 224.9,1036.9C233.2,1029.5 245.7,1017.7 249.9,1013.9M-10.0,1067.0C-5.1,1069.1 9.6,1075.8 19.5,1079.8C29.5,1083.8 39.5,1087.4 49.7,1090.9C60.0,1094.4 70.3,1098.8 80.9,1100.7C91.5,1102.7 102.7,1103.0 113.4,1102.5C124.1,1102.1 135.2,1101.4 145.3,1098.0C155.4,1094.7 164.7,1088.5 173.9,1082.4C183.1,1076.3 191.8,1068.2 200.4,1061.7C209.0,1055.2 217.2,1049.9 225.5,1043.3C233.8,1036.8 246.0,1025.8 250.1,1022.3M-10.2,1072.0C-5.2,1074.4 9.8,1082.3 19.8,1086.2C29.8,1090.1 39.7,1091.9 50.0,1095.5C60.2,1099.2 70.6,1105.7 81.2,1108.1C91.9,1110.4 103.1,1110.2 113.7,1109.5C124.3,1108.9 134.6,1108.3 144.6,1104.3C154.6,1100.2 164.6,1091.4 173.9,1085.2C183.1,1079.0 191.8,1073.5 200.3,1067.2C208.8,1061.0 216.5,1054.4 224.8,1047.7C233.2,1040.9 246.2,1030.3 250.5,1026.9" fill="none" stroke="#7cc2f2" stroke-width="1.4" opacity=".55"/>

</g>
<rect x="1040" y="1015" width="220" height="40" fill="url(#gGlow)"/>
<path d="M1403,1030 L1920,1030 L1920,1080 L1368,1080Z" fill="#1c2548"/>
<linearGradient id="gTx" gradientUnits="userSpaceOnUse" x1="1200" y1="0" x2="1330" y2="0"><stop offset="0" stop-color="#3f7cab" stop-opacity="0"/><stop offset=".25" stop-color="#5c9ac0" stop-opacity=".9"/><stop offset=".6" stop-color="#8ac6da"/><stop offset="1" stop-color="#b2dce8"/></linearGradient>
<path d="M1180,43 L1210,0 L1362,0 L1330,43Z" fill="url(#gTx)"/>
<path d="M1187.4,56.5C1189.2,54.0 1194.8,46.4 1198.3,41.6C1201.7,36.7 1204.8,32.4 1208.3,27.1C1211.7,21.9 1215.7,15.4 1219.0,10.0C1222.3,4.6 1226.7,-2.6 1228.2,-5.1M1192.4,56.9C1194.0,53.9 1199.1,44.1 1202.4,38.9C1205.8,33.7 1209.0,30.4 1212.4,25.8C1215.7,21.2 1219.1,16.2 1222.4,11.3C1225.8,6.4 1231.0,-1.1 1232.7,-3.6M1196.2,55.4C1197.8,52.9 1202.7,45.2 1206.1,40.5C1209.4,35.8 1212.8,32.1 1216.2,27.4C1219.6,22.7 1223.0,17.5 1226.4,12.0C1229.7,6.6 1234.7,-2.3 1236.3,-5.2M1200.3,53.4C1202.0,51.4 1207.4,46.1 1210.6,41.3C1213.9,36.5 1216.5,29.9 1219.8,24.8C1223.0,19.6 1227.0,14.8 1230.3,10.4C1233.7,5.9 1238.4,0.2 1240.0,-1.9M1203.9,55.6C1205.7,53.2 1210.8,46.0 1214.2,41.1C1217.6,36.2 1220.8,31.1 1224.3,26.2C1227.7,21.2 1231.6,16.8 1234.9,11.7C1238.3,6.6 1242.8,-1.9 1244.4,-4.6M1208.3,55.5C1210.0,52.8 1215.0,43.8 1218.4,39.5C1221.9,35.2 1225.6,34.5 1229.0,29.9C1232.3,25.4 1235.3,18.3 1238.6,12.1C1241.9,6.0 1247.1,-3.7 1248.8,-6.8M1212.4,53.9C1214.2,51.7 1219.9,45.0 1223.3,40.3C1226.6,35.6 1229.2,30.8 1232.5,25.9C1235.7,21.0 1239.5,16.0 1242.9,10.8C1246.2,5.7 1251.0,-2.4 1252.6,-5.0M1216.4,56.2C1218.2,53.8 1224.2,46.4 1227.6,41.7C1231.1,37.0 1233.7,32.6 1237.0,28.0C1240.3,23.4 1244.0,19.3 1247.3,14.2C1250.7,9.0 1255.6,-0.3 1257.2,-3.2M1220.7,55.3C1222.4,52.9 1227.7,46.3 1231.0,41.0C1234.3,35.6 1237.4,28.5 1240.7,23.1C1243.9,17.7 1247.3,13.0 1250.7,8.6C1254.0,4.3 1259.1,-1.1 1260.8,-3.0M1224.0,56.0C1225.9,53.5 1231.7,45.3 1235.4,40.8C1239.0,36.3 1242.7,33.6 1245.9,29.0C1249.1,24.5 1251.3,18.5 1254.5,13.2C1257.7,8.0 1263.2,0.2 1265.0,-2.4M1229.3,53.9C1230.9,51.5 1235.5,44.0 1238.8,39.4C1242.1,34.8 1245.6,31.0 1248.9,26.1C1252.2,21.2 1255.1,15.0 1258.5,10.1C1261.8,5.2 1267.3,-0.9 1269.1,-3.1M1233.2,52.2C1234.8,50.1 1239.5,44.3 1242.8,39.8C1246.2,35.3 1249.9,30.1 1253.3,25.4C1256.8,20.7 1260.4,16.3 1263.6,11.6C1266.9,6.9 1271.3,-0.5 1272.9,-3.0M1237.5,54.3C1239.2,52.1 1244.5,46.0 1247.8,41.3C1251.1,36.7 1254.2,31.0 1257.5,26.3C1260.8,21.6 1264.2,18.0 1267.5,13.2C1270.8,8.4 1275.7,0.2 1277.3,-2.4M1241.7,55.2C1243.4,52.7 1248.8,45.1 1252.0,40.6C1255.1,36.1 1257.4,33.4 1260.6,28.3C1263.8,23.2 1268.0,15.4 1271.4,10.0C1274.8,4.5 1279.3,-1.9 1280.9,-4.3M1246.4,55.7C1247.8,53.4 1251.6,45.9 1254.8,41.4C1258.0,37.0 1262.1,34.7 1265.4,29.2C1268.8,23.6 1271.7,13.8 1275.0,8.4C1278.2,2.9 1283.3,-1.5 1285.0,-3.5M1249.4,51.8C1251.1,50.3 1256.6,47.1 1259.8,43.1C1263.1,39.2 1265.6,32.7 1268.9,28.0C1272.1,23.4 1275.9,20.5 1279.3,15.3C1282.6,10.0 1287.6,-0.2 1289.2,-3.3M1254.2,55.8C1255.7,53.4 1260.2,47.0 1263.5,41.7C1266.7,36.3 1270.1,28.7 1273.6,23.6C1277.1,18.5 1281.3,15.6 1284.5,11.2C1287.7,6.9 1291.4,-0.2 1292.8,-2.5M1257.1,53.0C1258.9,50.8 1264.1,44.0 1267.6,39.8C1271.1,35.7 1274.7,32.5 1278.0,28.0C1281.3,23.4 1284.2,17.9 1287.5,12.5C1290.7,7.1 1295.7,-1.8 1297.4,-4.6M1262.1,53.6C1263.8,51.5 1269.1,46.2 1272.4,41.3C1275.7,36.4 1278.8,29.4 1282.0,24.3C1285.3,19.2 1288.6,15.2 1291.8,10.6C1295.0,6.0 1299.8,-0.9 1301.5,-3.2M1265.8,56.4C1267.5,53.6 1272.9,44.8 1276.4,39.7C1279.9,34.6 1283.4,30.5 1286.7,25.9C1289.9,21.3 1292.7,16.9 1295.7,12.0C1298.7,7.0 1303.3,-1.1 1304.8,-3.7M1270.2,57.3C1272.0,54.4 1277.4,45.4 1280.8,40.2C1284.3,35.0 1287.8,30.8 1291.0,26.3C1294.2,21.8 1297.0,17.4 1300.1,13.1C1303.1,8.8 1307.8,2.7 1309.3,0.6M1274.5,53.2C1276.2,51.0 1281.6,45.2 1284.9,40.0C1288.1,34.8 1290.9,26.4 1294.2,21.9C1297.5,17.4 1301.2,16.9 1304.4,13.0C1307.7,9.1 1312.1,0.9 1313.6,-1.5M1279.3,54.9C1280.9,52.4 1285.6,44.0 1288.8,39.5C1292.0,35.0 1295.0,32.9 1298.3,27.9C1301.5,23.0 1305.0,15.0 1308.2,9.8C1311.4,4.6 1315.9,-1.1 1317.5,-3.3M1282.3,55.7C1284.0,52.7 1289.0,42.7 1292.3,38.2C1295.6,33.8 1298.9,33.4 1302.1,29.0C1305.2,24.7 1308.2,17.3 1311.5,12.1C1314.7,7.0 1319.9,0.3 1321.6,-2.0M1286.3,54.5C1288.0,52.4 1293.3,46.8 1296.7,41.8C1300.0,36.8 1303.0,29.3 1306.4,24.6C1309.7,19.9 1313.5,18.2 1316.7,13.5C1319.9,8.7 1324.1,-1.0 1325.5,-3.9M1291.1,55.2C1292.8,52.4 1297.8,43.5 1301.1,38.7C1304.4,33.9 1307.7,30.6 1310.8,26.1C1313.9,21.7 1316.7,17.1 1319.8,12.2C1322.9,7.2 1327.8,-1.0 1329.4,-3.6M1295.3,52.9C1296.9,50.9 1301.5,45.4 1304.8,41.2C1308.1,37.1 1311.8,33.3 1315.0,28.0C1318.2,22.7 1320.7,14.6 1323.8,9.6C1326.9,4.5 1331.9,-0.3 1333.6,-2.3M1300.2,55.9C1301.6,53.6 1305.5,47.1 1308.5,41.8C1311.6,36.5 1315.1,29.1 1318.6,24.2C1322.1,19.3 1326.4,16.7 1329.6,12.3C1332.8,7.9 1336.4,0.3 1337.8,-2.2M1304.2,55.4C1305.7,52.7 1310.5,43.5 1313.6,39.0C1316.6,34.6 1319.2,32.9 1322.4,28.5C1325.7,24.1 1330.0,17.8 1333.2,12.6C1336.4,7.4 1340.2,-0.2 1341.6,-2.8M1307.2,57.3C1308.9,54.6 1314.1,46.2 1317.4,41.3C1320.8,36.4 1324.1,32.7 1327.3,28.0C1330.6,23.3 1333.9,18.0 1336.8,13.0C1339.8,7.9 1343.7,0.3 1345.0,-2.2" fill="none" stroke="#e8f6fa" stroke-width="1.2" opacity=".62"/>
<path d="M1320,43 L1349,0 L1364,0 L1340,43Z" fill="#d9edf6"/>
<path d="M1340,43 L1364,0 L1402,0 L1376,43Z" fill="#3ba9f0"/>
<path d="M1376,43 L1402,0 L1460,0 L1432,43Z" fill="#2c88ee"/>
<path d="M1400,43 L1428,0 L1434,0 L1408,43Z" fill="#62b4f6"/>
<path d="M1432,43 L1460,0 L1920,0 L1920,43Z" fill="url(#gTop2)"/>
<path d="M1700.0,694.0C1704.0,692.7 1713.2,690.0 1724.0,686.0C1734.8,682.0 1751.7,675.2 1765.0,670.0C1778.3,664.8 1791.2,660.5 1804.0,655.0C1816.8,649.5 1829.2,643.5 1842.0,637.0C1854.8,630.5 1868.0,623.8 1881.0,616.0C1894.0,608.2 1909.3,597.7 1920.0,590.0C1930.7,582.3 1940.8,573.3 1945.0,570.0L1945,0L1700,0Z" fill="url(#gRoy)"/>
<path d="M1700.0,694.0C1704.0,692.7 1713.2,690.0 1724.0,686.0C1734.8,682.0 1751.7,675.2 1765.0,670.0C1778.3,664.8 1791.2,660.5 1804.0,655.0C1816.8,649.5 1829.2,643.5 1842.0,637.0C1854.8,630.5 1868.0,623.8 1881.0,616.0C1894.0,608.2 1909.3,597.7 1920.0,590.0C1930.7,582.3 1940.8,573.3 1945.0,570.0L1945,0L1700,0Z" fill="url(#gRoyD)"/>
<path d="M1700.1,470.7C1706.0,469.3 1723.9,465.2 1735.4,462.1C1747.0,458.9 1758.2,455.4 1769.4,451.7C1780.5,448.0 1791.6,445.0 1802.1,439.7C1812.6,434.5 1823.2,427.8 1832.5,420.3C1841.9,412.8 1850.5,403.5 1858.2,394.7C1865.9,385.8 1872.4,377.0 1878.7,367.3C1884.9,357.6 1890.6,347.2 1895.8,336.4C1900.9,325.5 1905.1,313.6 1909.3,302.2C1913.6,290.8 1917.4,279.1 1921.1,268.0C1924.9,257.0 1930.1,241.3 1931.9,235.9M1700.0,474.1C1705.7,472.8 1722.8,469.5 1734.3,466.6C1745.8,463.7 1757.7,460.6 1768.9,456.8C1780.0,453.0 1790.6,449.0 1801.1,443.8C1811.7,438.6 1822.7,432.8 1832.0,425.6C1841.4,418.4 1849.4,410.1 1857.1,400.8C1864.8,391.4 1872.0,379.3 1878.4,369.5C1884.7,359.7 1890.0,351.7 1895.2,341.9C1900.3,332.1 1904.9,321.7 1909.3,310.7C1913.6,299.7 1917.5,287.4 1921.4,276.2C1925.3,264.9 1930.9,248.8 1932.8,243.3M1699.8,478.6C1705.7,477.8 1723.4,476.4 1734.9,473.7C1746.3,471.0 1757.5,466.3 1768.6,462.4C1779.7,458.5 1790.9,455.4 1801.3,450.3C1811.8,445.2 1822.0,439.1 1831.1,431.7C1840.3,424.3 1848.6,414.7 1856.4,405.9C1864.1,397.1 1871.1,388.7 1877.5,378.7C1884.0,368.7 1889.9,356.4 1895.1,345.9C1900.3,335.5 1904.3,326.6 1908.6,315.8C1912.9,305.0 1916.8,292.1 1920.9,281.2C1925.0,270.2 1931.2,255.4 1933.2,250.2M1700.1,483.0C1705.9,481.9 1723.3,479.1 1734.7,476.3C1746.1,473.5 1757.7,470.0 1768.6,466.3C1779.6,462.6 1790.2,459.1 1800.5,454.0C1810.8,449.0 1821.1,443.2 1830.3,436.0C1839.6,428.7 1848.3,419.3 1856.1,410.5C1863.9,401.7 1870.6,392.9 1877.1,383.3C1883.5,373.7 1889.4,362.9 1894.7,352.9C1899.9,342.9 1904.0,333.3 1908.6,323.1C1913.1,312.9 1917.7,302.5 1921.8,291.5C1926.0,280.5 1931.3,262.8 1933.2,257.1M1700.5,488.1C1706.0,487.0 1722.7,484.2 1733.9,481.4C1745.2,478.6 1757.1,475.2 1768.1,471.2C1779.0,467.1 1789.4,462.5 1799.7,457.2C1810.1,452.0 1820.8,446.3 1830.1,439.6C1839.4,432.9 1847.6,425.4 1855.3,417.0C1863.1,408.5 1870.2,398.7 1876.7,389.0C1883.2,379.3 1888.9,369.0 1894.2,358.7C1899.5,348.4 1903.8,337.7 1908.4,327.3C1913.0,316.9 1917.4,306.9 1921.6,296.3C1925.7,285.7 1931.3,269.2 1933.3,263.7M1699.9,493.8C1705.5,492.3 1722.3,487.5 1733.5,485.0C1744.8,482.6 1756.4,482.9 1767.4,479.3C1778.5,475.7 1789.6,468.7 1800.0,463.4C1810.3,458.1 1820.4,454.4 1829.5,447.5C1838.6,440.5 1846.9,430.4 1854.7,421.7C1862.5,413.0 1869.8,404.9 1876.3,395.5C1882.8,386.0 1888.4,375.0 1893.8,365.1C1899.3,355.3 1904.3,346.7 1908.9,336.5C1913.5,326.3 1917.4,314.6 1921.5,303.9C1925.5,293.1 1931.2,277.2 1933.1,271.9M1699.9,498.4C1705.6,497.1 1722.9,493.3 1734.0,490.5C1745.2,487.8 1755.8,485.7 1766.7,481.9C1777.5,478.2 1788.6,473.4 1798.9,468.0C1809.2,462.7 1819.4,456.7 1828.5,450.1C1837.6,443.5 1845.6,436.7 1853.4,428.6C1861.3,420.6 1868.8,411.2 1875.5,401.8C1882.2,392.3 1888.5,382.0 1893.8,371.7C1899.2,361.5 1903.1,350.7 1907.6,340.4C1912.1,330.0 1916.6,320.2 1921.0,309.5C1925.4,298.9 1931.9,281.9 1934.0,276.4M1700.1,501.2C1705.7,500.3 1722.6,498.0 1733.7,495.5C1744.8,493.0 1755.9,490.1 1766.7,486.2C1777.5,482.4 1788.3,477.7 1798.5,472.6C1808.6,467.5 1818.3,461.8 1827.5,455.5C1836.8,449.1 1846.1,442.8 1854.1,434.7C1862.0,426.6 1868.8,416.3 1875.3,407.0C1881.7,397.8 1887.2,389.1 1892.7,379.2C1898.1,369.3 1903.2,358.0 1908.0,347.6C1912.7,337.3 1916.9,327.3 1921.3,316.9C1925.7,306.6 1932.0,290.8 1934.2,285.5M1699.7,507.2C1705.4,506.1 1723.0,503.0 1734.1,500.4C1745.3,497.8 1755.7,495.5 1766.4,491.6C1777.0,487.7 1788.1,482.0 1798.3,477.0C1808.5,471.9 1818.3,467.9 1827.4,461.4C1836.5,455.0 1845.1,446.5 1853.0,438.2C1860.9,429.8 1868.2,420.5 1874.8,411.3C1881.4,402.2 1886.9,393.2 1892.5,383.3C1898.1,373.5 1903.5,362.2 1908.2,352.2C1913.0,342.2 1916.8,332.9 1921.2,323.1C1925.7,313.3 1932.5,298.4 1934.8,293.4M1700.4,510.8C1705.9,509.9 1722.6,507.3 1733.5,504.9C1744.4,502.5 1755.2,500.4 1765.8,496.4C1776.5,492.4 1787.2,486.2 1797.3,480.8C1807.4,475.5 1817.6,470.3 1826.7,464.1C1835.8,457.9 1844.2,451.2 1852.1,443.7C1859.9,436.3 1867.2,428.5 1873.9,419.3C1880.5,410.1 1886.4,398.3 1892.0,388.4C1897.6,378.5 1902.5,369.3 1907.4,359.7C1912.2,350.1 1916.6,341.2 1921.1,330.9C1925.7,320.7 1932.4,303.5 1934.6,298.0M1700.2,517.1C1705.7,516.0 1722.2,512.9 1733.2,510.1C1744.1,507.4 1755.2,504.3 1765.9,500.6C1776.6,497.0 1787.3,493.1 1797.4,488.2C1807.5,483.3 1817.4,477.6 1826.3,471.0C1835.3,464.4 1843.4,456.4 1851.2,448.5C1859.0,440.6 1866.5,432.1 1873.2,423.6C1879.8,415.1 1885.6,407.2 1891.3,397.6C1897.0,388.0 1902.5,375.9 1907.5,365.8C1912.4,355.8 1916.4,347.0 1921.0,337.1C1925.6,327.2 1932.7,311.5 1935.1,306.4M1700.0,521.4C1705.5,520.2 1722.2,516.6 1733.1,514.1C1743.9,511.6 1754.6,510.1 1765.3,506.4C1776.0,502.6 1787.3,496.9 1797.3,491.6C1807.3,486.3 1816.4,481.3 1825.4,474.8C1834.4,468.4 1843.4,460.5 1851.2,452.9C1859.1,445.2 1865.9,437.6 1872.5,429.0C1879.2,420.4 1885.3,410.7 1891.0,401.1C1896.8,391.5 1902.1,381.0 1907.1,371.4C1912.1,361.9 1916.5,353.3 1921.2,343.8C1925.9,334.2 1933.0,319.1 1935.4,314.1M1699.5,526.4C1705.0,525.4 1722.0,523.0 1732.9,520.1C1743.9,517.3 1754.4,513.1 1764.9,509.3C1775.4,505.4 1786.2,501.8 1796.2,496.9C1806.1,492.0 1815.5,486.1 1824.6,479.9C1833.7,473.7 1842.8,467.2 1850.8,459.6C1858.8,452.0 1865.8,442.9 1872.5,434.2C1879.2,425.6 1885.5,416.1 1891.2,407.5C1897.0,398.9 1901.9,391.9 1907.0,382.4C1912.2,372.9 1917.1,360.6 1921.9,350.5C1926.7,340.4 1933.3,326.6 1935.6,321.8M1700.4,531.2C1705.6,530.0 1721.3,526.8 1732.0,524.1C1742.7,521.4 1753.9,518.6 1764.5,515.0C1775.2,511.4 1785.9,507.7 1795.9,502.6C1805.9,497.6 1815.6,490.6 1824.6,484.6C1833.6,478.7 1842.1,474.1 1850.0,466.8C1857.9,459.4 1865.1,449.1 1871.8,440.7C1878.6,432.2 1884.8,425.0 1890.6,416.0C1896.4,406.9 1901.4,395.9 1906.6,386.3C1911.8,376.7 1917.0,368.1 1921.9,358.6C1926.7,349.0 1933.5,333.9 1935.8,329.0M1699.9,536.7C1705.3,535.2 1721.6,530.7 1732.3,528.0C1743.0,525.3 1753.8,524.1 1764.2,520.6C1774.6,517.0 1784.7,512.1 1794.7,506.9C1804.6,501.8 1814.8,496.0 1823.9,489.7C1833.0,483.4 1841.2,475.8 1849.2,468.9C1857.1,462.1 1864.5,456.5 1871.4,448.4C1878.3,440.2 1884.8,429.3 1890.8,420.0C1896.7,410.8 1901.8,402.0 1906.9,393.0C1912.1,384.0 1917.0,375.5 1921.8,366.2C1926.6,356.9 1933.5,341.8 1935.8,336.9M1700.0,542.8C1705.4,541.2 1721.5,536.2 1732.2,533.3C1742.8,530.3 1753.5,528.6 1763.9,525.2C1774.2,521.7 1784.6,517.7 1794.4,512.5C1804.3,507.2 1813.9,499.8 1822.9,493.7C1832.0,487.6 1840.8,483.0 1848.7,476.0C1856.7,469.0 1863.7,460.2 1870.6,451.8C1877.4,443.5 1884.1,434.6 1890.1,425.9C1896.1,417.1 1901.0,408.4 1906.3,399.1C1911.7,389.8 1917.1,379.6 1922.2,370.1C1927.3,360.6 1934.4,347.0 1936.8,342.4M1699.7,547.5C1705.0,545.8 1721.3,540.3 1731.9,537.4C1742.5,534.5 1752.9,533.6 1763.3,530.1C1773.7,526.6 1784.4,521.2 1794.2,516.4C1804.1,511.7 1813.7,507.5 1822.6,501.6C1831.5,495.7 1839.8,488.5 1847.7,481.0C1855.5,473.6 1863.0,465.0 1870.0,456.9C1876.9,448.8 1883.2,441.1 1889.2,432.4C1895.3,423.8 1901.0,414.0 1906.4,405.2C1911.8,396.4 1916.7,388.4 1921.7,379.4C1926.8,370.4 1934.3,355.8 1936.8,351.1M1700.4,551.6C1705.7,550.1 1722.0,545.7 1732.4,542.7C1742.9,539.7 1753.0,536.9 1763.3,533.7C1773.5,530.4 1784.2,528.2 1793.9,523.4C1803.6,518.6 1812.3,511.0 1821.3,504.9C1830.2,498.8 1839.4,493.7 1847.4,486.8C1855.5,479.8 1862.7,471.0 1869.6,463.0C1876.6,455.1 1883.1,447.4 1889.1,439.1C1895.2,430.8 1900.8,422.1 1906.2,413.2C1911.5,404.4 1916.2,394.9 1921.3,385.8C1926.3,376.6 1934.1,362.9 1936.7,358.4M1699.9,555.0C1705.2,553.7 1721.3,550.3 1731.7,547.4C1742.1,544.4 1752.2,540.6 1762.4,537.2C1772.6,533.8 1783.0,531.4 1792.8,527.0C1802.7,522.6 1812.5,516.8 1821.5,510.8C1830.6,504.9 1839.0,498.2 1846.9,491.3C1854.8,484.4 1861.8,477.2 1868.8,469.4C1875.8,461.5 1882.8,452.6 1888.9,444.2C1895.1,435.7 1900.4,427.4 1905.9,418.5C1911.5,409.7 1916.7,400.1 1922.0,391.1C1927.3,382.0 1935.0,368.7 1937.6,364.2M1700.1,559.9C1705.4,558.8 1721.2,555.9 1731.5,553.5C1741.8,551.1 1752.0,548.9 1762.2,545.5C1772.3,542.1 1782.6,538.2 1792.4,533.2C1802.2,528.1 1812.0,521.3 1820.9,515.3C1829.8,509.3 1837.9,503.9 1845.8,497.1C1853.8,490.3 1861.3,482.6 1868.3,474.5C1875.4,466.5 1881.9,457.4 1888.1,448.8C1894.4,440.2 1900.1,431.4 1905.8,422.9C1911.4,414.5 1916.9,406.6 1922.2,398.1C1927.4,389.5 1934.8,376.0 1937.3,371.5M1700.1,564.1C1705.2,562.9 1720.5,559.6 1730.7,556.8C1740.9,554.0 1751.0,550.9 1761.3,547.3C1771.6,543.7 1782.4,539.8 1792.3,535.2C1802.1,530.6 1811.3,525.3 1820.2,519.7C1829.0,514.1 1837.5,508.1 1845.4,501.6C1853.3,495.1 1860.6,488.2 1867.8,480.7C1874.9,473.3 1882.0,465.2 1888.4,456.8C1894.7,448.5 1900.0,439.2 1905.7,430.6C1911.3,422.0 1916.9,414.0 1922.3,405.4C1927.7,396.8 1935.4,383.3 1938.1,378.9M1700.5,568.4C1705.6,567.6 1720.8,566.2 1730.9,563.5C1741.1,560.8 1751.4,556.2 1761.4,552.3C1771.5,548.3 1781.5,543.7 1791.2,539.7C1800.8,535.7 1810.4,534.1 1819.4,528.5C1828.4,522.9 1837.1,513.4 1845.0,506.2C1853.0,499.0 1859.9,492.8 1867.0,485.4C1874.1,478.0 1881.4,469.6 1887.8,461.9C1894.1,454.1 1899.5,447.2 1905.3,438.9C1911.0,430.6 1917.0,421.2 1922.4,412.1C1927.8,403.0 1935.2,389.2 1937.7,384.6M1699.8,572.9C1705.0,571.9 1720.8,569.0 1731.0,566.8C1741.3,564.6 1751.3,563.4 1761.3,559.7C1771.3,556.0 1781.5,549.3 1791.1,544.8C1800.7,540.2 1810.2,537.8 1819.0,532.3C1827.8,526.8 1835.9,518.7 1843.8,511.7C1851.8,504.6 1859.4,497.5 1866.7,489.9C1873.9,482.4 1881.1,474.0 1887.5,466.4C1893.9,458.7 1899.2,452.0 1905.0,444.2C1910.7,436.4 1916.6,428.0 1922.1,419.5C1927.7,410.9 1935.7,397.5 1938.4,393.1M1700.3,577.9C1705.4,576.8 1720.6,574.0 1730.6,571.5C1740.7,569.0 1751.0,566.4 1760.8,562.8C1770.7,559.2 1780.3,554.5 1789.9,550.1C1799.5,545.8 1809.5,541.5 1818.4,536.5C1827.3,531.5 1835.2,526.8 1843.2,520.0C1851.3,513.2 1859.6,502.8 1866.8,495.7C1874.1,488.6 1880.4,484.8 1886.8,477.3C1893.2,469.9 1899.5,459.8 1905.4,451.2C1911.3,442.5 1916.7,434.1 1922.2,425.6C1927.7,417.1 1935.8,404.2 1938.5,399.9M1700.2,584.4C1705.2,583.0 1720.3,578.8 1730.3,575.8C1740.3,572.8 1750.5,569.6 1760.4,566.5C1770.3,563.3 1780.1,560.8 1789.6,556.7C1799.1,552.5 1808.7,547.3 1817.6,541.7C1826.5,536.2 1834.9,529.8 1842.9,523.3C1850.9,516.8 1858.3,509.8 1865.6,502.6C1872.8,495.3 1879.9,487.3 1886.5,479.8C1893.2,472.3 1899.4,465.3 1905.3,457.4C1911.3,449.5 1916.5,440.7 1922.1,432.5C1927.6,424.2 1935.9,411.9 1938.7,407.8M1699.8,590.8C1704.8,588.9 1720.0,583.0 1730.0,579.5C1740.0,576.1 1750.0,573.1 1759.8,570.1C1769.7,567.1 1779.6,565.7 1789.1,561.5C1798.7,557.3 1808.3,550.1 1817.1,544.9C1825.9,539.7 1833.9,536.4 1842.0,530.4C1850.0,524.3 1857.8,515.4 1865.2,508.5C1872.5,501.7 1879.6,496.8 1886.2,489.4C1892.9,482.0 1899.1,472.1 1905.2,464.0C1911.2,455.8 1916.8,448.8 1922.5,440.4C1928.1,432.0 1936.2,418.2 1939.0,413.8M1700.0,593.5C1705.0,592.4 1720.0,589.6 1730.1,586.7C1740.1,583.7 1750.6,579.6 1760.4,576.0C1770.1,572.4 1779.2,569.1 1788.6,565.1C1797.9,561.2 1807.6,557.7 1816.4,552.3C1825.2,547.0 1833.5,539.6 1841.4,533.1C1849.3,526.6 1856.6,520.0 1864.0,513.3C1871.4,506.6 1879.0,500.3 1885.7,493.1C1892.4,485.8 1898.2,477.6 1904.3,469.9C1910.4,462.3 1916.6,455.1 1922.4,447.1C1928.3,439.1 1936.4,426.0 1939.2,421.8M1699.5,598.2C1704.6,596.7 1720.4,591.9 1730.4,589.2C1740.3,586.4 1749.6,585.2 1759.2,581.9C1768.8,578.6 1778.6,573.6 1788.0,569.4C1797.4,565.1 1806.8,561.7 1815.6,556.3C1824.5,551.0 1832.9,543.6 1840.9,537.4C1849.0,531.1 1856.6,525.4 1863.9,519.0C1871.3,512.7 1878.2,506.2 1885.0,499.3C1891.8,492.4 1898.4,485.1 1904.6,477.6C1910.8,470.1 1916.4,462.3 1922.3,454.4C1928.2,446.5 1937.1,434.3 1940.0,430.3M1700.4,604.0C1705.3,602.8 1720.0,599.9 1729.6,597.0C1739.3,594.1 1748.9,590.3 1758.5,586.6C1768.1,582.9 1778.1,579.0 1787.4,574.6C1796.7,570.3 1805.7,565.3 1814.5,560.5C1823.3,555.6 1832.1,551.3 1840.3,545.4C1848.5,539.6 1856.3,532.4 1863.7,525.5C1871.1,518.6 1877.9,511.4 1884.7,504.3C1891.5,497.2 1898.0,490.0 1904.3,482.9C1910.7,475.9 1916.8,470.0 1922.7,462.0C1928.6,454.0 1937.1,439.4 1940.0,434.9M1699.7,607.5C1704.6,606.6 1719.3,605.2 1729.1,602.2C1739.0,599.3 1748.9,593.2 1758.6,589.7C1768.3,586.1 1777.9,585.1 1787.2,581.1C1796.5,577.1 1805.6,570.9 1814.3,565.7C1823.0,560.6 1831.4,555.7 1839.6,550.2C1847.7,544.6 1855.5,538.7 1863.1,532.4C1870.6,526.1 1877.8,519.4 1884.7,512.4C1891.6,505.4 1898.2,497.9 1904.5,490.3C1910.7,482.7 1916.1,474.8 1922.1,467.0C1928.1,459.1 1937.3,447.1 1940.3,443.2M1700.3,613.4C1705.1,612.4 1719.4,610.0 1729.0,607.2C1738.7,604.3 1748.7,599.7 1758.4,596.2C1768.0,592.6 1777.5,590.3 1786.8,585.8C1796.0,581.2 1805.2,574.2 1813.9,569.0C1822.6,563.8 1830.8,560.1 1838.8,554.8C1846.9,549.4 1854.5,543.5 1862.0,537.1C1869.6,530.8 1877.4,523.3 1884.3,516.8C1891.3,510.3 1897.2,505.5 1903.5,498.1C1909.9,490.8 1916.3,480.5 1922.5,472.7C1928.7,464.9 1937.6,454.8 1940.6,451.2M1699.8,619.4C1704.7,617.8 1719.3,612.6 1729.0,609.6C1738.7,606.6 1748.4,604.8 1757.8,601.5C1767.3,598.2 1776.6,593.6 1785.8,589.9C1795.0,586.2 1804.4,584.0 1813.1,579.3C1821.9,574.7 1830.1,568.1 1838.2,561.9C1846.3,555.8 1854.2,548.8 1861.8,542.5C1869.4,536.2 1876.8,530.9 1883.8,524.3C1890.9,517.7 1897.6,510.2 1904.1,502.9C1910.5,495.5 1916.4,487.6 1922.5,480.2C1928.7,472.8 1937.9,462.1 1940.9,458.5M1700.4,623.9C1705.2,622.7 1719.8,620.1 1729.3,616.8C1738.8,613.5 1748.2,608.0 1757.5,604.0C1766.8,600.0 1775.8,596.8 1785.1,593.0C1794.3,589.1 1804.2,585.1 1813.0,580.7C1821.9,576.3 1830.0,571.7 1838.2,566.4C1846.3,561.2 1854.3,555.5 1861.8,549.3C1869.3,543.1 1876.2,535.9 1883.2,529.2C1890.1,522.5 1897.0,516.1 1903.5,509.2C1910.1,502.2 1916.3,495.2 1922.6,487.6C1928.9,479.9 1938.4,467.4 1941.5,463.4M1700.1,627.4C1704.9,626.3 1719.3,623.6 1728.8,620.9C1738.3,618.2 1747.8,614.4 1757.0,611.0C1766.3,607.6 1775.3,604.3 1784.4,600.3C1793.6,596.4 1803.0,592.5 1811.7,587.2C1820.5,581.9 1829.1,574.1 1837.2,568.6C1845.3,563.1 1852.8,559.7 1860.5,554.2C1868.2,548.7 1876.1,542.5 1883.3,535.8C1890.4,529.1 1896.8,520.6 1903.4,514.0C1910.1,507.4 1916.9,503.2 1923.2,496.2C1929.5,489.2 1938.3,476.1 1941.3,472.1M1699.5,634.0C1704.5,632.6 1719.8,628.6 1729.4,625.6C1739.0,622.5 1747.9,618.9 1757.0,615.6C1766.2,612.2 1775.1,609.4 1784.1,605.4C1793.1,601.4 1802.2,596.1 1810.9,591.4C1819.7,586.7 1828.4,582.6 1836.6,577.4C1844.8,572.2 1852.7,566.2 1860.3,560.0C1867.9,553.8 1875.1,546.7 1882.2,540.3C1889.4,533.8 1896.5,527.9 1903.2,521.2C1909.9,514.5 1916.1,507.3 1922.5,500.0C1928.8,492.7 1938.3,481.3 1941.4,477.6M1699.6,636.3C1704.4,635.3 1718.9,633.0 1728.4,630.0C1738.0,627.0 1747.7,621.6 1756.9,618.3C1766.1,614.9 1774.7,613.5 1783.7,609.8C1792.6,606.2 1801.8,601.1 1810.6,596.3C1819.4,591.6 1828.3,586.9 1836.4,581.5C1844.5,576.1 1851.6,569.6 1859.3,564.0C1866.9,558.4 1874.9,554.0 1882.1,547.9C1889.4,541.8 1895.7,533.9 1902.6,527.4C1909.4,520.8 1916.5,515.4 1923.1,508.7C1929.6,502.0 1938.6,490.8 1941.7,487.3M1700.2,641.0C1704.8,640.0 1718.8,637.9 1728.1,634.8C1737.4,631.7 1746.6,625.8 1755.7,622.4C1764.9,619.0 1774.1,618.3 1783.2,614.5C1792.4,610.7 1801.7,604.3 1810.5,599.5C1819.3,594.8 1827.9,590.6 1836.1,586.0C1844.2,581.5 1851.7,577.6 1859.4,572.2C1867.0,566.9 1874.8,560.0 1882.0,553.8C1889.1,547.7 1895.6,542.3 1902.4,535.4C1909.2,528.5 1916.0,519.2 1922.7,512.4C1929.5,505.6 1939.6,497.5 1943.0,494.5M1700.5,646.7C1705.2,645.7 1719.2,643.7 1728.4,640.8C1737.7,637.9 1747.0,633.0 1756.0,629.3C1765.0,625.6 1773.6,622.5 1782.4,618.5C1791.2,614.4 1800.1,609.5 1808.8,605.1C1817.5,600.6 1826.4,596.2 1834.7,591.5C1842.9,586.8 1850.6,581.6 1858.5,576.6C1866.3,571.5 1874.5,566.7 1881.9,561.0C1889.2,555.4 1895.8,549.1 1902.6,542.5C1909.4,535.9 1916.1,528.5 1922.8,521.4C1929.5,514.3 1939.4,503.4 1942.7,499.8" fill="none" stroke="#4f74d0" stroke-width="1.3" opacity=".5"/>
<path d="M1699.9,470.0C1705.7,469.3 1723.4,468.5 1734.9,466.1C1746.4,463.7 1757.9,459.7 1769.0,455.5C1780.2,451.2 1791.4,445.7 1801.8,440.5C1812.3,435.2 1822.3,431.1 1831.7,424.1C1841.1,417.1 1850.6,407.5 1858.3,398.5C1866.1,389.5 1872.0,379.9 1878.2,370.0C1884.4,360.1 1890.1,349.7 1895.3,339.0C1900.5,328.4 1904.9,317.1 1909.2,305.9C1913.6,294.7 1917.4,283.2 1921.2,271.7C1925.1,260.3 1930.5,242.9 1932.4,237.1M1699.9,475.1C1705.7,474.1 1723.1,471.1 1734.6,468.7C1746.1,466.4 1757.8,464.7 1768.9,460.9C1779.9,457.1 1790.7,451.5 1801.1,446.1C1811.5,440.8 1821.7,435.8 1831.1,428.9C1840.5,422.0 1849.7,413.3 1857.4,404.7C1865.2,396.0 1871.5,386.7 1877.7,377.0C1883.9,367.3 1889.3,357.6 1894.5,346.4C1899.7,335.2 1904.2,320.8 1908.8,309.9C1913.3,299.1 1917.9,291.9 1921.9,281.4C1925.9,270.8 1930.7,252.6 1932.5,246.8M1699.9,481.9C1705.6,480.7 1722.6,476.9 1734.0,474.2C1745.5,471.6 1757.4,469.5 1768.6,465.9C1779.8,462.2 1790.8,457.8 1801.3,452.3C1811.8,446.8 1822.3,440.4 1831.4,432.9C1840.6,425.5 1848.7,416.0 1856.3,407.7C1863.9,399.4 1870.5,392.3 1876.8,383.1C1883.2,373.8 1888.9,362.8 1894.3,352.0C1899.6,341.3 1904.3,329.6 1908.7,318.7C1913.2,307.8 1917.0,297.3 1921.1,286.7C1925.1,276.2 1931.0,260.5 1933.0,255.3M1700.2,486.5C1705.8,485.5 1722.7,482.9 1734.0,480.4C1745.3,478.0 1756.8,475.6 1768.0,471.9C1779.2,468.2 1790.8,463.9 1801.1,458.4C1811.5,452.9 1821.0,446.3 1830.1,439.0C1839.1,431.7 1847.6,423.1 1855.3,414.6C1863.0,406.0 1869.9,396.8 1876.3,387.5C1882.8,378.3 1888.6,369.0 1894.0,358.9C1899.3,348.7 1904.0,337.0 1908.4,326.6C1912.9,316.2 1916.7,306.8 1920.9,296.4C1925.0,286.0 1931.4,269.5 1933.6,264.1M1700.2,493.9C1705.9,492.6 1722.6,489.3 1734.0,486.1C1745.3,482.9 1757.4,478.5 1768.4,474.9C1779.4,471.3 1789.9,469.4 1800.1,464.5C1810.3,459.6 1820.3,452.7 1829.5,445.4C1838.7,438.1 1847.5,429.3 1855.2,420.6C1863.0,411.9 1869.8,402.7 1876.2,393.3C1882.5,383.9 1888.1,374.0 1893.5,364.1C1898.9,354.3 1903.7,344.6 1908.3,334.0C1913.0,323.4 1917.1,311.2 1921.4,300.7C1925.7,290.3 1932.2,276.3 1934.3,271.4M1700.2,497.3C1705.8,496.3 1722.6,494.1 1733.8,491.2C1745.0,488.2 1756.4,482.9 1767.3,479.6C1778.3,476.2 1789.3,475.8 1799.4,471.1C1809.6,466.4 1819.0,458.6 1828.1,451.2C1837.3,443.8 1846.3,435.7 1854.3,427.0C1862.2,418.3 1869.4,408.2 1875.9,399.2C1882.4,390.1 1888.0,382.7 1893.3,372.9C1898.7,363.1 1903.4,351.1 1908.1,340.5C1912.8,329.9 1917.0,319.8 1921.4,309.2C1925.8,298.6 1932.3,282.5 1934.5,277.1M1700.3,501.7C1705.9,500.7 1722.9,498.3 1733.8,495.7C1744.8,493.2 1755.2,490.3 1766.0,486.5C1776.7,482.7 1787.9,478.3 1798.3,473.0C1808.7,467.6 1819.4,461.0 1828.5,454.5C1837.6,448.1 1845.4,442.2 1853.1,434.4C1860.9,426.7 1868.2,417.7 1874.9,408.2C1881.5,398.6 1887.4,387.0 1893.0,377.1C1898.5,367.3 1903.2,359.2 1908.0,349.2C1912.7,339.2 1917.3,327.7 1921.7,317.1C1926.1,306.6 1932.2,291.0 1934.3,285.8M1699.8,510.2C1705.4,508.5 1722.4,502.9 1733.4,499.9C1744.5,497.0 1755.4,496.0 1766.2,492.5C1777.0,488.9 1788.1,483.8 1798.2,478.6C1808.4,473.4 1818.1,468.1 1827.1,461.2C1836.1,454.4 1844.4,445.6 1852.3,437.4C1860.2,429.3 1867.8,420.9 1874.5,412.3C1881.2,403.7 1887.0,395.5 1892.5,385.9C1898.1,376.4 1903.0,365.2 1908.0,355.1C1912.9,344.9 1917.7,335.4 1922.1,325.3C1926.5,315.2 1932.4,299.6 1934.5,294.5M1700.1,512.6C1705.6,511.6 1722.4,508.8 1733.3,506.2C1744.1,503.5 1754.7,500.5 1765.4,496.8C1776.0,493.0 1787.2,488.6 1797.4,483.6C1807.5,478.5 1817.0,472.8 1826.2,466.4C1835.3,459.9 1844.2,452.5 1852.1,444.7C1859.9,436.9 1866.7,428.6 1873.3,419.6C1879.9,410.7 1885.9,400.8 1891.6,391.1C1897.4,381.4 1903.0,371.0 1908.0,361.4C1912.9,351.7 1916.9,343.2 1921.4,333.2C1925.8,323.2 1932.5,306.6 1934.8,301.3M1700.1,519.9C1705.4,518.3 1721.5,513.8 1732.3,510.7C1743.2,507.6 1754.5,504.7 1765.2,501.0C1776.0,497.3 1786.5,493.4 1796.6,488.5C1806.8,483.5 1816.9,477.6 1826.1,471.3C1835.2,465.1 1843.7,458.5 1851.5,450.8C1859.2,443.2 1866.1,434.1 1872.8,425.3C1879.6,416.6 1886.4,407.6 1892.1,398.3C1897.8,388.9 1902.3,378.8 1907.2,369.1C1912.1,359.3 1916.6,349.9 1921.3,339.8C1926.0,329.7 1933.1,313.8 1935.4,308.6M1699.9,525.2C1705.4,523.8 1721.8,520.1 1732.7,517.0C1743.5,513.9 1754.2,509.9 1764.8,506.5C1775.4,503.2 1786.1,501.7 1796.1,496.8C1806.2,491.9 1816.1,484.0 1825.2,477.2C1834.3,470.4 1842.6,463.7 1850.6,456.1C1858.5,448.5 1865.8,440.2 1872.7,431.6C1879.5,423.1 1886.0,414.0 1891.8,404.8C1897.6,395.6 1902.6,386.3 1907.6,376.5C1912.6,366.6 1917.2,355.4 1921.8,345.6C1926.4,335.7 1933.2,322.0 1935.4,317.2M1699.9,527.2C1705.4,526.3 1722.1,524.1 1732.9,521.6C1743.7,519.2 1754.1,515.9 1764.6,512.3C1775.1,508.8 1785.7,505.3 1795.7,500.3C1805.6,495.3 1815.2,488.7 1824.3,482.3C1833.3,476.0 1842.2,469.8 1850.1,462.2C1858.0,454.7 1865.0,445.6 1871.7,437.0C1878.5,428.5 1884.6,420.3 1890.5,411.1C1896.4,402.0 1902.1,391.5 1907.3,382.2C1912.6,372.9 1917.4,364.7 1922.1,355.3C1926.9,345.9 1933.4,330.8 1935.6,326.0M1699.6,532.9C1705.0,531.9 1721.2,529.4 1732.0,526.8C1742.8,524.2 1753.7,521.2 1764.2,517.3C1774.7,513.3 1785.2,508.1 1795.2,503.1C1805.2,498.1 1815.1,493.3 1824.1,487.4C1833.1,481.4 1841.4,475.0 1849.2,467.5C1857.0,460.0 1864.1,450.7 1870.9,442.5C1877.7,434.2 1884.0,426.4 1890.0,417.8C1896.0,409.2 1901.7,400.3 1907.0,390.9C1912.2,381.4 1916.6,370.7 1921.4,361.2C1926.3,351.6 1933.4,338.1 1935.8,333.5M1699.4,541.2C1704.8,539.6 1721.3,534.6 1732.1,531.7C1742.8,528.8 1753.6,527.4 1764.0,524.0C1774.4,520.7 1784.8,516.3 1794.7,511.6C1804.6,506.8 1814.3,501.9 1823.3,495.5C1832.4,489.2 1841.1,481.2 1849.0,473.6C1857.0,466.1 1864.3,458.6 1871.1,450.2C1877.9,441.9 1884.0,432.2 1889.9,423.6C1895.8,414.9 1901.3,407.1 1906.5,398.1C1911.8,389.2 1916.4,379.6 1921.4,370.1C1926.4,360.6 1934.0,346.0 1936.5,341.1M1699.3,545.1C1704.8,543.7 1721.5,540.2 1732.2,537.0C1742.9,533.7 1753.2,529.5 1763.5,525.8C1773.9,522.2 1784.3,519.8 1794.2,515.2C1804.1,510.5 1813.9,503.9 1822.9,498.0C1831.9,492.0 1840.3,486.4 1848.2,479.3C1856.1,472.2 1863.5,463.0 1870.3,455.3C1877.2,447.7 1883.3,442.0 1889.3,433.3C1895.3,424.7 1900.7,413.3 1906.2,403.7C1911.6,394.1 1916.6,384.7 1921.8,375.9C1926.9,367.0 1934.5,354.7 1937.0,350.4M1699.8,548.8C1705.2,548.0 1721.5,546.4 1732.1,544.1C1742.7,541.7 1753.2,538.4 1763.3,534.6C1773.5,530.7 1783.5,526.1 1793.2,521.0C1802.9,515.9 1812.4,510.0 1821.5,503.9C1830.6,497.9 1839.5,491.6 1847.6,484.7C1855.7,477.8 1863.3,470.2 1870.2,462.5C1877.0,454.8 1882.8,447.0 1888.9,438.5C1895.0,430.1 1901.3,420.9 1906.8,412.0C1912.2,403.0 1916.5,394.0 1921.6,384.7C1926.7,375.4 1934.7,360.9 1937.4,356.1M1699.8,556.8C1705.1,555.2 1721.2,550.2 1731.6,547.1C1742.1,543.9 1752.3,541.3 1762.6,537.9C1772.8,534.5 1783.1,530.9 1792.9,526.5C1802.8,522.2 1812.7,517.4 1821.6,511.5C1830.5,505.7 1838.2,498.7 1846.1,491.6C1854.1,484.5 1862.0,477.1 1869.2,469.1C1876.3,461.2 1882.8,452.1 1888.9,443.8C1895.0,435.5 1900.3,428.5 1905.7,419.5C1911.2,410.4 1916.4,399.0 1921.7,389.7C1927.0,380.4 1934.9,368.0 1937.6,363.7M1699.9,559.6C1705.1,558.4 1720.6,554.8 1731.0,552.3C1741.4,549.7 1752.1,547.5 1762.2,544.2C1772.3,540.9 1781.9,537.3 1791.6,532.5C1801.2,527.7 1811.1,521.2 1820.2,515.3C1829.3,509.4 1838.2,503.4 1846.1,496.9C1854.1,490.5 1860.9,484.3 1867.8,476.7C1874.8,469.1 1881.6,459.5 1887.9,451.3C1894.3,443.0 1900.2,435.5 1905.9,427.0C1911.5,418.5 1916.7,409.2 1921.9,400.3C1927.1,391.4 1934.8,377.9 1937.3,373.4M1699.8,566.0C1705.1,564.8 1721.4,561.4 1731.7,559.0C1742.1,556.5 1751.9,555.1 1761.9,551.3C1771.9,547.5 1782.1,541.3 1791.8,536.2C1801.5,531.1 1811.1,526.1 1820.1,520.7C1829.1,515.3 1837.7,510.7 1845.6,504.0C1853.5,497.3 1860.5,488.2 1867.5,480.5C1874.6,472.7 1881.5,465.5 1887.8,457.7C1894.1,449.8 1899.7,441.8 1905.3,433.2C1910.9,424.7 1916.1,415.2 1921.5,406.3C1926.9,397.4 1935.0,384.3 1937.7,379.9M1700.1,570.4C1705.3,569.3 1720.9,566.6 1731.1,563.7C1741.3,560.8 1751.3,556.4 1761.3,552.9C1771.2,549.4 1781.1,546.9 1790.8,542.7C1800.4,538.5 1809.9,532.9 1818.9,527.4C1827.9,521.9 1836.7,516.4 1844.9,509.7C1853.0,503.0 1860.5,494.4 1867.6,487.0C1874.6,479.6 1880.7,473.0 1887.0,465.3C1893.4,457.6 1899.7,449.1 1905.5,440.8C1911.4,432.5 1916.7,424.1 1922.2,415.4C1927.6,406.7 1935.7,393.2 1938.4,388.7M1700.2,577.3C1705.3,576.0 1720.6,572.4 1730.8,569.3C1741.0,566.3 1751.3,562.6 1761.3,559.0C1771.4,555.3 1781.5,551.9 1791.1,547.5C1800.6,543.2 1810.0,538.0 1818.8,532.8C1827.6,527.6 1835.8,523.3 1843.8,516.5C1851.7,509.8 1859.3,499.9 1866.4,492.2C1873.6,484.6 1880.1,478.1 1886.7,470.6C1893.3,463.0 1899.9,455.3 1905.9,447.0C1911.8,438.6 1917.1,429.1 1922.5,420.7C1927.9,412.3 1935.9,400.5 1938.5,396.5M1700.5,581.5C1705.6,580.3 1720.8,577.4 1730.7,574.6C1740.7,571.9 1750.5,568.7 1760.3,564.7C1770.2,560.7 1780.3,554.9 1789.9,550.6C1799.5,546.3 1809.2,544.2 1818.0,539.0C1826.9,533.7 1835.0,525.5 1843.0,519.0C1851.1,512.5 1859.1,506.7 1866.3,500.0C1873.6,493.3 1880.4,486.5 1886.8,478.9C1893.2,471.4 1899.0,462.9 1904.9,454.6C1910.8,446.3 1916.6,437.6 1922.2,429.1C1927.8,420.6 1936.0,407.9 1938.7,403.7M1700.3,587.6C1705.3,586.2 1720.3,582.4 1730.3,579.3C1740.3,576.2 1750.5,572.5 1760.3,569.0C1770.1,565.5 1779.8,562.4 1789.2,558.2C1798.7,554.0 1808.2,548.8 1817.0,543.8C1825.9,538.8 1834.2,534.4 1842.3,528.1C1850.4,521.9 1858.4,513.3 1865.7,506.4C1873.0,499.4 1879.5,494.0 1886.1,486.4C1892.6,478.8 1898.9,469.0 1904.9,460.8C1911.0,452.5 1916.7,445.2 1922.4,437.0C1928.2,428.7 1936.6,415.8 1939.5,411.5M1700.6,591.8C1705.6,590.5 1720.4,586.6 1730.3,583.8C1740.3,581.0 1750.6,578.0 1760.3,574.8C1770.1,571.6 1779.4,568.9 1788.8,564.5C1798.2,560.0 1808.1,554.0 1816.9,548.3C1825.7,542.7 1833.7,536.6 1841.7,530.6C1849.7,524.5 1857.4,518.8 1864.8,512.0C1872.1,505.3 1878.9,497.6 1885.6,490.1C1892.2,482.6 1898.4,474.6 1904.5,467.2C1910.7,459.8 1916.9,453.6 1922.6,445.6C1928.3,437.6 1936.0,423.7 1938.7,419.3M1699.9,598.5C1704.8,597.1 1719.8,592.8 1729.6,589.9C1739.5,587.0 1749.3,584.6 1759.1,581.0C1768.8,577.5 1778.8,573.1 1788.3,568.7C1797.7,564.3 1807.2,559.8 1815.9,554.7C1824.7,549.7 1832.6,544.5 1840.6,538.4C1848.7,532.3 1856.7,524.8 1864.2,518.2C1871.7,511.6 1878.9,506.0 1885.5,498.7C1892.2,491.3 1897.9,481.8 1904.1,474.2C1910.4,466.6 1917.0,461.0 1922.9,453.0C1928.8,445.0 1936.7,430.6 1939.4,426.1M1699.8,602.8C1704.7,601.5 1719.5,598.4 1729.3,595.3C1739.1,592.2 1748.8,588.0 1758.6,584.3C1768.4,580.7 1778.5,577.3 1787.9,573.5C1797.3,569.6 1806.3,566.1 1815.1,561.1C1823.9,556.1 1832.6,549.5 1840.7,543.3C1848.7,537.0 1856.1,530.2 1863.5,523.7C1871.0,517.3 1878.6,511.7 1885.3,504.7C1892.1,497.8 1897.7,489.6 1903.9,482.0C1910.2,474.5 1916.6,467.1 1922.7,459.5C1928.8,451.9 1937.5,440.3 1940.5,436.5M1699.8,608.5C1704.7,607.2 1719.3,603.3 1729.1,600.8C1738.9,598.3 1749.0,597.4 1758.6,593.5C1768.3,589.6 1777.8,581.9 1787.1,577.3C1796.4,572.8 1805.6,570.9 1814.3,566.1C1823.0,561.3 1831.3,554.4 1839.3,548.6C1847.4,542.7 1855.3,537.6 1862.8,531.1C1870.3,524.7 1877.4,516.9 1884.3,509.8C1891.3,502.7 1898.0,496.0 1904.3,488.5C1910.6,481.1 1916.5,472.6 1922.4,465.1C1928.4,457.7 1937.1,447.2 1940.0,443.6M1699.5,613.8C1704.5,612.4 1719.7,608.5 1729.5,605.4C1739.3,602.2 1748.7,598.1 1758.2,594.9C1767.8,591.6 1777.6,590.0 1786.9,585.8C1796.2,581.7 1805.2,574.7 1813.9,569.7C1822.5,564.8 1830.6,561.6 1838.7,556.2C1846.9,550.8 1855.2,543.9 1862.8,537.3C1870.4,530.7 1877.5,523.6 1884.3,516.7C1891.2,509.9 1897.4,503.5 1903.8,496.1C1910.2,488.8 1916.6,479.8 1922.8,472.5C1928.9,465.1 1937.8,455.5 1940.8,452.1M1699.7,617.8C1704.6,616.5 1719.7,612.9 1729.2,610.3C1738.8,607.7 1747.6,605.5 1757.0,602.0C1766.5,598.5 1776.5,593.7 1786.0,589.6C1795.4,585.4 1805.0,581.9 1813.7,577.2C1822.4,572.4 1830.2,567.0 1838.1,561.2C1846.1,555.4 1853.8,548.7 1861.4,542.4C1869.0,536.1 1876.6,529.7 1883.7,523.4C1890.7,517.2 1897.0,511.7 1903.5,504.9C1910.1,498.0 1916.7,489.9 1923.0,482.3C1929.2,474.6 1938.0,463.0 1941.0,459.1M1700.4,624.4C1705.3,622.9 1720.0,618.5 1729.5,615.3C1738.9,612.0 1748.0,608.3 1757.3,605.0C1766.6,601.8 1776.0,599.7 1785.2,595.9C1794.5,592.0 1804.1,586.7 1812.9,581.9C1821.6,577.0 1829.7,572.2 1837.7,566.5C1845.7,560.9 1853.3,554.5 1860.9,548.2C1868.5,541.9 1876.0,535.2 1883.1,528.9C1890.2,522.6 1896.9,517.1 1903.5,510.3C1910.1,503.4 1916.4,494.9 1922.6,487.9C1928.8,480.9 1937.7,471.6 1940.7,468.4" fill="none" stroke="#151c62" stroke-width="1.2" opacity=".35"/>
<path d="M1700.0,694.0C1704.0,692.7 1713.2,690.0 1724.0,686.0C1734.8,682.0 1751.7,675.2 1765.0,670.0C1778.3,664.8 1791.2,660.5 1804.0,655.0C1816.8,649.5 1829.2,643.5 1842.0,637.0C1854.8,630.5 1868.0,623.8 1881.0,616.0C1894.0,608.2 1909.3,597.7 1920.0,590.0C1930.7,582.3 1940.8,573.3 1945.0,570.0" fill="none" stroke="#45aee6" stroke-width="1.3" opacity=".7"/>

<path d="M1700.0,462.0C1704.0,461.3 1709.5,461.7 1724.0,458.0C1738.5,454.3 1768.2,448.0 1787.0,440.0C1805.8,432.0 1823.2,421.2 1837.0,410.0C1850.8,398.8 1860.7,385.8 1870.0,373.0C1879.3,360.2 1886.8,345.2 1893.0,333.0C1899.2,320.8 1902.5,311.8 1907.0,300.0C1911.5,288.2 1915.8,274.5 1920.0,262.0C1924.2,249.5 1930.0,231.2 1932.0,225.0L1945,0L1700,0Z" fill="url(#gCy)"/>
<path d="M1699.7,401.2C1706.4,399.5 1726.6,394.7 1739.7,391.3C1752.8,387.8 1765.3,385.1 1778.1,380.6C1790.9,376.1 1805.1,371.4 1816.4,364.5C1827.7,357.6 1837.4,349.0 1846.1,339.3C1854.7,329.6 1862.0,318.1 1868.3,306.2C1874.7,294.3 1879.9,280.6 1884.2,267.9C1888.6,255.2 1891.8,243.6 1894.2,230.0C1896.6,216.4 1897.4,200.1 1898.7,186.3C1900.0,172.6 1900.6,160.8 1902.0,147.6C1903.4,134.4 1906.2,114.0 1907.1,107.2M1700.0,405.3C1706.6,403.8 1726.6,399.8 1739.6,396.5C1752.6,393.2 1765.4,389.7 1778.0,385.4C1790.5,381.0 1803.7,377.5 1814.9,370.5C1826.1,363.6 1836.3,353.6 1845.1,343.5C1853.9,333.4 1861.3,321.3 1867.8,310.0C1874.3,298.6 1879.8,287.8 1884.3,275.3C1888.7,262.9 1892.0,248.5 1894.6,235.4C1897.2,222.3 1898.2,209.8 1899.7,196.7C1901.2,183.6 1902.2,170.1 1903.7,156.7C1905.2,143.3 1908.0,123.0 1908.8,116.2M1700.1,408.4C1706.6,407.3 1726.3,404.5 1739.1,401.6C1751.9,398.7 1764.4,395.7 1777.0,391.0C1789.5,386.3 1803.0,380.5 1814.2,373.4C1825.4,366.4 1835.3,357.9 1844.1,348.9C1852.9,339.9 1860.5,330.7 1867.0,319.5C1873.6,308.3 1878.9,294.3 1883.5,281.7C1888.1,269.1 1891.8,256.6 1894.7,243.9C1897.6,231.2 1899.1,218.5 1900.7,205.5C1902.4,192.6 1903.1,179.6 1904.7,166.4C1906.3,153.1 1909.4,132.8 1910.4,126.1M1700.3,415.1C1706.6,413.5 1725.7,409.2 1738.3,405.9C1751.0,402.6 1763.8,399.6 1776.3,395.2C1788.8,390.9 1802.1,386.4 1813.3,379.9C1824.4,373.4 1834.4,365.6 1843.2,356.4C1852.1,347.1 1859.4,335.6 1866.2,324.4C1872.9,313.2 1878.8,301.2 1883.6,289.1C1888.4,277.0 1892.0,264.8 1895.1,251.8C1898.1,238.8 1899.9,224.2 1901.8,211.2C1903.8,198.2 1905.0,186.4 1906.8,173.6C1908.5,160.8 1911.5,140.8 1912.5,134.2M1699.6,419.0C1706.0,417.8 1725.4,414.7 1738.1,411.8C1750.7,408.9 1763.1,405.9 1775.4,401.6C1787.7,397.3 1800.9,392.7 1812.0,386.0C1823.1,379.2 1833.1,370.4 1842.0,361.0C1850.8,351.7 1858.2,341.0 1865.0,330.1C1871.8,319.2 1877.9,307.6 1882.8,295.7C1887.8,283.8 1891.5,271.2 1894.7,258.8C1897.9,246.3 1899.7,233.7 1902.0,221.0C1904.3,208.4 1906.3,196.0 1908.4,183.0C1910.5,170.0 1913.5,149.6 1914.5,142.9M1699.7,422.8C1706.1,421.6 1725.5,418.7 1738.1,415.8C1750.6,412.8 1762.9,409.0 1775.1,405.1C1787.3,401.3 1800.0,398.8 1811.0,392.5C1822.0,386.2 1832.1,376.3 1841.0,367.2C1849.9,358.1 1857.5,348.6 1864.4,337.7C1871.2,326.9 1877.1,314.1 1882.2,302.0C1887.3,290.0 1891.3,277.3 1894.8,265.5C1898.3,253.7 1900.8,243.4 1903.2,231.2C1905.6,218.9 1906.9,205.1 1909.2,192.0C1911.4,178.9 1915.3,159.0 1916.6,152.5M1699.9,428.8C1706.2,427.8 1725.0,425.9 1737.4,422.9C1749.7,420.0 1761.9,415.6 1774.0,411.1C1786.1,406.6 1799.0,402.4 1810.0,396.2C1821.1,390.0 1831.2,382.7 1840.2,374.0C1849.1,365.3 1856.9,354.8 1863.9,343.8C1870.9,332.9 1877.0,319.7 1882.2,308.4C1887.5,297.1 1892.0,287.9 1895.6,276.1C1899.3,264.4 1901.6,250.8 1904.1,238.1C1906.6,225.4 1908.2,212.5 1910.5,199.8C1912.9,187.1 1917.0,168.3 1918.3,162.0M1700.2,433.2C1706.4,431.8 1724.9,427.7 1737.2,424.8C1749.4,422.0 1761.8,420.0 1773.7,416.0C1785.7,412.1 1797.8,407.6 1808.8,401.3C1819.8,395.0 1830.6,386.8 1839.6,378.1C1848.6,369.5 1855.8,359.2 1862.8,349.4C1869.9,339.5 1876.5,330.1 1882.0,318.8C1887.4,307.5 1891.7,293.5 1895.5,281.4C1899.2,269.3 1901.8,258.3 1904.6,246.4C1907.4,234.4 1909.4,222.2 1912.1,209.8C1914.8,197.3 1919.4,178.1 1920.8,171.7M1700.2,439.3C1706.3,437.8 1725.0,433.5 1737.2,430.5C1749.4,427.4 1761.7,424.7 1773.4,420.8C1785.2,417.0 1797.0,413.3 1807.8,407.2C1818.5,401.1 1829.0,392.7 1838.1,384.1C1847.1,375.6 1854.7,365.5 1862.0,355.7C1869.2,346.0 1876.0,336.6 1881.7,325.8C1887.3,314.9 1891.7,302.6 1895.7,290.6C1899.6,278.6 1902.4,266.0 1905.4,253.7C1908.4,241.3 1911.1,228.6 1913.9,216.4C1916.7,204.3 1920.8,186.8 1922.2,180.9M1699.9,442.7C1706.0,441.6 1724.5,438.8 1736.6,436.1C1748.8,433.3 1761.0,430.3 1772.7,426.3C1784.4,422.4 1796.1,418.5 1806.9,412.4C1817.6,406.4 1828.0,398.3 1837.1,390.2C1846.2,382.1 1854.2,373.2 1861.5,363.6C1868.9,353.9 1875.5,343.4 1881.1,332.3C1886.7,321.2 1891.0,308.7 1895.2,297.0C1899.4,285.3 1902.9,274.0 1906.2,262.1C1909.6,250.2 1912.1,237.6 1915.2,225.6C1918.3,213.6 1923.1,196.0 1924.6,190.1M1699.7,449.4C1705.8,448.0 1724.4,443.9 1736.4,440.8C1748.5,437.7 1760.4,434.8 1772.0,430.9C1783.6,427.0 1795.5,423.2 1806.2,417.4C1816.9,411.6 1826.8,404.2 1835.9,396.2C1845.0,388.3 1853.3,379.3 1860.7,369.6C1868.1,360.0 1874.8,349.7 1880.6,338.4C1886.4,327.2 1891.2,313.7 1895.6,302.0C1900.1,290.4 1903.7,279.7 1907.2,268.6C1910.7,257.5 1913.6,247.2 1916.8,235.6C1920.1,224.0 1924.9,205.0 1926.5,198.9M1700.0,453.1C1705.9,451.9 1723.9,448.3 1735.7,445.8C1747.6,443.2 1759.4,441.3 1770.9,437.6C1782.5,433.9 1794.2,429.4 1804.9,423.6C1815.6,417.7 1825.9,410.3 1835.1,402.4C1844.2,394.5 1852.6,385.8 1860.1,376.3C1867.7,366.9 1874.4,356.4 1880.4,345.7C1886.3,335.0 1891.1,323.3 1895.7,312.0C1900.4,300.8 1904.6,289.3 1908.4,278.1C1912.1,266.9 1914.8,256.1 1918.2,244.5C1921.6,233.0 1926.9,214.7 1928.7,208.8M1699.9,459.9C1705.9,458.5 1723.9,454.8 1735.6,451.6C1747.4,448.4 1759.1,444.6 1770.5,440.7C1781.8,436.8 1793.0,433.8 1803.6,428.4C1814.2,422.9 1824.9,415.8 1834.2,408.0C1843.5,400.1 1851.5,390.7 1859.1,381.3C1866.7,371.9 1873.5,361.4 1879.7,351.4C1885.9,341.4 1891.3,331.9 1896.2,321.2C1901.2,310.5 1905.6,298.9 1909.5,287.2C1913.4,275.6 1916.2,263.1 1919.6,251.4C1922.9,239.7 1927.9,222.7 1929.6,217.0" fill="none" stroke="#b4dcfa" stroke-width="1" opacity=".55"/>
<path d="M1700.0,462.0C1704.0,461.3 1709.5,461.7 1724.0,458.0C1738.5,454.3 1768.2,448.0 1787.0,440.0C1805.8,432.0 1823.2,421.2 1837.0,410.0C1850.8,398.8 1860.7,385.8 1870.0,373.0C1879.3,360.2 1886.8,345.2 1893.0,333.0C1899.2,320.8 1902.5,311.8 1907.0,300.0C1911.5,288.2 1915.8,274.5 1920.0,262.0C1924.2,249.5 1930.0,231.2 1932.0,225.0" fill="none" stroke="#c8e8fc" stroke-width="1.2" opacity=".7"/>

<path d="M1700,332 L1724,330 C1740,322 1750,317 1760,309 C1770,300 1780,288 1791,266 C1800,250 1808,232 1822,199 C1828,182 1833,157 1844,116 L1855,60 L1873,0 L1912,0 C1908,50 1900,105 1891,152 C1888,165 1886,175 1883,185 C1880,200 1876,214 1872,227 C1867,242 1862,255 1855,268 C1848,281 1840,293 1830,304 C1822,313 1815,320 1808,325 C1800,331 1790,335 1780,338 C1770,342 1760,344 1750,346 L1724,351 L1700,354Z" fill="url(#gLB)"/>
<path d="M1878.1,-5.6C1876.4,1.0 1871.7,21.0 1867.9,34.0C1864.1,47.0 1858.6,59.5 1855.3,72.7C1851.9,85.9 1850.8,100.1 1847.8,113.4C1844.9,126.6 1840.9,139.3 1837.5,152.3C1834.1,165.4 1831.6,179.1 1827.4,191.8C1823.3,204.6 1817.9,216.4 1812.3,228.9C1806.7,241.3 1796.9,260.1 1793.8,266.4M1880.6,-5.2C1878.9,1.4 1874.3,21.0 1870.6,34.2C1866.9,47.3 1861.6,60.5 1858.3,73.7C1854.9,87.0 1853.3,100.4 1850.3,113.5C1847.4,126.6 1844.0,139.3 1840.6,152.4C1837.2,165.5 1834.3,179.4 1830.1,192.2C1825.9,204.9 1820.8,216.7 1815.2,229.0C1809.7,241.3 1799.9,259.8 1796.8,265.9M1883.7,-4.9C1882.0,1.6 1877.3,21.3 1873.5,34.2C1869.8,47.2 1864.6,59.6 1861.2,72.7C1857.9,85.9 1856.5,99.8 1853.5,113.0C1850.5,126.2 1846.5,138.7 1843.1,151.8C1839.7,165.0 1837.4,178.7 1833.1,191.8C1828.9,204.8 1823.1,217.7 1817.5,230.1C1811.9,242.5 1802.4,260.2 1799.4,266.3M1886.4,-4.9C1884.7,1.6 1880.0,21.0 1876.3,34.2C1872.6,47.3 1867.5,61.0 1864.1,74.1C1860.8,87.3 1859.1,100.2 1856.1,113.1C1853.1,126.1 1849.4,138.6 1846.0,151.9C1842.6,165.2 1839.8,179.8 1835.5,192.9C1831.2,206.1 1826.0,218.4 1820.4,230.6C1814.9,242.8 1805.4,260.1 1802.3,266.0M1889.2,-4.7C1887.6,1.9 1883.0,21.7 1879.3,34.7C1875.6,47.7 1870.3,60.1 1867.0,73.2C1863.7,86.4 1862.6,100.4 1859.5,113.6C1856.5,126.7 1852.1,139.2 1848.6,152.2C1845.1,165.2 1842.8,178.7 1838.5,191.6C1834.3,204.4 1828.8,216.7 1823.2,229.1C1817.6,241.6 1808.0,260.0 1805.0,266.2M1892.1,-5.0C1890.4,1.6 1885.9,21.3 1882.3,34.4C1878.7,47.6 1873.7,60.6 1870.4,73.7C1867.1,86.8 1865.5,99.8 1862.3,112.9C1859.1,126.1 1854.7,139.1 1851.2,152.4C1847.7,165.8 1845.6,179.8 1841.3,192.9C1837.1,205.9 1831.4,218.3 1825.8,230.6C1820.2,242.8 1810.7,260.4 1807.7,266.4M1894.3,-4.9C1892.7,1.7 1888.3,21.9 1884.7,34.8C1881.2,47.8 1876.1,59.5 1872.8,72.7C1869.6,85.8 1868.2,100.2 1865.2,113.6C1862.2,127.0 1858.1,140.0 1854.6,153.1C1851.1,166.1 1848.6,179.3 1844.3,191.9C1839.9,204.6 1834.2,216.5 1828.6,228.9C1823.0,241.3 1813.7,260.1 1810.7,266.4M1897.5,-5.2C1895.8,1.4 1891.3,21.5 1887.6,34.5C1884.0,47.6 1878.9,59.8 1875.7,72.9C1872.4,86.1 1871.3,100.2 1868.3,113.4C1865.2,126.5 1860.8,138.8 1857.2,151.9C1853.7,165.1 1851.0,179.4 1846.8,192.3C1842.5,205.2 1837.3,217.3 1831.7,229.5C1826.1,241.8 1816.3,259.8 1813.2,265.8M1900.0,-4.3C1898.5,2.3 1894.1,22.8 1890.5,35.8C1886.9,48.7 1881.7,60.4 1878.5,73.3C1875.2,86.2 1874.0,100.0 1870.9,113.2C1867.8,126.3 1863.5,139.0 1860.0,152.1C1856.4,165.3 1854.0,179.1 1849.7,192.1C1845.4,205.1 1839.9,217.8 1834.3,230.1C1828.7,242.5 1819.1,260.2 1816.1,266.2M1903.0,-5.1C1901.4,1.6 1897.0,21.9 1893.4,35.0C1889.8,48.1 1884.8,60.6 1881.5,73.6C1878.2,86.5 1876.7,99.4 1873.6,112.6C1870.5,125.9 1866.4,139.7 1862.9,153.0C1859.3,166.4 1856.8,179.9 1852.5,192.8C1848.3,205.6 1842.7,217.8 1837.1,230.1C1831.5,242.4 1821.9,260.4 1818.9,266.5M1905.7,-5.1C1904.1,1.4 1899.7,20.9 1896.1,34.1C1892.6,47.2 1887.7,60.5 1884.5,73.9C1881.2,87.3 1879.6,101.3 1876.5,114.4C1873.4,127.5 1869.3,139.7 1865.8,152.6C1862.3,165.5 1859.6,178.8 1855.2,191.7C1850.9,204.5 1845.5,217.2 1839.9,229.7C1834.3,242.1 1824.7,260.2 1821.7,266.3M1908.6,-5.1C1907.0,1.5 1902.3,21.4 1898.7,34.5C1895.2,47.7 1890.4,60.6 1887.2,73.9C1883.9,87.2 1882.5,101.0 1879.4,114.2C1876.3,127.4 1872.4,140.1 1868.8,153.1C1865.3,166.1 1862.5,179.3 1858.1,192.1C1853.8,205.0 1848.4,217.8 1842.7,230.1C1837.0,242.5 1827.2,260.2 1824.1,266.2M1911.7,-5.0C1910.0,1.5 1905.4,21.1 1901.8,34.3C1898.1,47.4 1893.2,60.9 1890.0,74.1C1886.7,87.3 1885.3,100.3 1882.3,113.6C1879.3,126.9 1875.4,140.8 1871.8,154.0C1868.2,167.2 1865.1,179.9 1860.7,192.6C1856.4,205.2 1851.1,217.6 1845.5,229.9C1839.9,242.1 1830.1,260.0 1827.0,266.0M1914.3,-4.7C1912.7,2.0 1908.2,22.2 1904.7,35.2C1901.2,48.3 1896.5,60.6 1893.2,73.8C1890.0,86.9 1888.3,101.2 1885.2,114.4C1882.1,127.5 1878.1,139.8 1874.5,152.7C1870.9,165.7 1868.0,179.1 1863.5,191.9C1859.1,204.7 1853.6,217.6 1848.0,229.7C1842.4,241.9 1832.8,259.1 1829.7,265.0M1916.8,-4.7C1915.3,1.8 1910.9,21.2 1907.5,34.2C1904.0,47.1 1899.4,60.1 1896.2,73.2C1892.9,86.4 1891.0,99.6 1887.8,113.0C1884.7,126.3 1880.8,140.1 1877.2,153.3C1873.7,166.5 1871.1,179.5 1866.6,192.2C1862.2,204.9 1856.5,217.1 1850.7,229.4C1845.0,241.7 1835.4,259.8 1832.3,265.9M1919.3,-4.9C1917.8,1.6 1913.8,21.6 1910.4,34.6C1907.0,47.6 1902.2,60.0 1898.9,73.1C1895.6,86.2 1893.8,99.9 1890.7,113.2C1887.6,126.6 1883.8,140.1 1880.3,153.4C1876.7,166.6 1873.6,179.9 1869.2,192.7C1864.8,205.6 1859.3,218.3 1853.6,230.5C1848.0,242.6 1838.3,259.9 1835.2,265.8M1922.5,-5.4C1920.9,1.2 1916.4,20.8 1913.0,33.9C1909.5,47.1 1905.0,60.4 1901.8,73.6C1898.6,86.9 1896.9,100.2 1893.7,113.4C1890.6,126.6 1886.8,139.4 1883.1,152.7C1879.5,165.9 1876.4,179.9 1872.0,192.8C1867.5,205.6 1862.4,217.7 1856.7,229.9C1850.9,242.0 1840.8,259.7 1837.6,265.7M1925.2,-5.0C1923.7,1.5 1919.6,20.9 1916.2,34.0C1912.8,47.1 1908.0,60.1 1904.7,73.4C1901.5,86.6 1900.0,100.4 1896.8,113.6C1893.7,126.8 1889.6,139.6 1885.9,152.6C1882.2,165.6 1879.1,178.8 1874.7,191.6C1870.2,204.4 1864.8,216.7 1859.1,229.2C1853.5,241.7 1843.9,260.4 1840.8,266.7M1927.9,-5.5C1926.4,1.1 1922.2,21.1 1918.8,34.4C1915.4,47.6 1911.0,60.7 1907.8,73.9C1904.6,87.1 1902.8,100.4 1899.6,113.5C1896.3,126.6 1892.0,139.4 1888.3,152.6C1884.6,165.7 1881.9,179.6 1877.5,192.4C1873.1,205.2 1867.7,216.9 1862.0,229.3C1856.3,241.7 1846.4,260.5 1843.3,266.8M1930.5,-5.5C1929.0,1.2 1925.0,21.1 1921.6,34.4C1918.3,47.6 1913.5,61.0 1910.4,74.0C1907.2,87.1 1905.8,99.7 1902.6,112.8C1899.5,126.0 1895.1,139.8 1891.5,153.0C1887.8,166.2 1884.9,179.2 1880.4,192.1C1876.0,205.0 1870.4,218.0 1864.7,230.3C1859.0,242.6 1849.2,260.0 1846.0,265.9M1933.4,-4.9C1931.9,1.8 1927.8,22.1 1924.5,35.2C1921.1,48.4 1916.5,60.9 1913.3,73.9C1910.1,86.9 1908.4,100.2 1905.2,113.2C1902.0,126.3 1897.8,139.4 1894.2,152.5C1890.5,165.6 1887.8,179.0 1883.3,191.9C1878.8,204.8 1873.1,217.7 1867.3,229.9C1861.6,242.1 1852.0,259.2 1848.9,265.1M1936.5,-5.0C1934.9,1.7 1930.7,22.2 1927.3,35.3C1923.9,48.4 1919.4,60.6 1916.2,73.5C1913.1,86.5 1911.6,99.9 1908.4,113.3C1905.3,126.6 1900.9,140.3 1897.1,153.5C1893.4,166.6 1890.4,179.3 1885.9,192.2C1881.4,205.1 1876.1,218.7 1870.3,231.0C1864.6,243.3 1854.6,260.1 1851.5,266.0" fill="none" stroke="#1f9fdc" stroke-width="1" opacity=".22"/>
<path d="M1700,354 L1724,351 L1750,346 C1760,344 1770,342 1780,338 C1790,335 1800,331 1808,325 C1815,320 1822,313 1830,304 C1840,293 1848,281 1855,268 C1862,255 1867,242 1872,227 C1876,214 1880,200 1883,185 C1886,175 1888,165 1891,152 C1895,168 1897,184 1897,199 C1897,214 1895,228 1891,240 C1888,255 1883,269 1877,282 C1872,295 1866,307 1858,318 C1852,328 1845,338 1836,346 C1828,354 1820,360 1810,365 C1803,369 1795,371 1787,373 C1767,383 1746,388 1724,392 L1700,396Z" fill="url(#gWd)"/>
<path d="M1700,240 L1830,170 L1820,227 C1816,239 1811,251 1805,262 C1800,272 1795,281 1787,290 C1780,299 1770,307 1760,313 C1750,320 1740,325 1724,330 L1700,332Z" fill="url(#gDB)"/>
<path d="M1700,240 L1830,170 L1807,227 C1800,238 1794,246 1787,253 C1777,264 1766,273 1753,280 C1744,285 1734,288 1724,290 L1700,292Z" fill="url(#gMB)"/>
<path d="M1700,0 L1873,0 C1870,30 1867,60 1853,93 C1850,106 1846,120 1843,133 C1840,146 1837,160 1833,173 C1830,180 1826,187 1820,193 C1814,203 1807,211 1800,217 C1788,227 1775,234 1760,238 C1748,243 1736,245 1724,247 L1700,250Z" fill="url(#gPur)"/>
<path d="M1700,0 L1828,0 C1827,18 1824,35 1820,50 C1817,67 1813,83 1807,97 C1800,110 1791,121 1780,130 C1772,137 1763,143 1753,147 C1744,151 1734,154 1724,157 L1700,162Z" fill="url(#gSal)"/>
<path d="M1700,0 L1762,0 C1757,15 1750,30 1742,43 C1737,51 1731,58 1724,65 L1700,80Z" fill="#1b2070"/>
</svg>

</div>
<div class="win">
<div class="main">
<div class="top">
<div class="sbox"><svg width="14" height="14" viewBox="0 0 14 14" fill="none" stroke="#2c2c2c" stroke-width="1.300"><circle cx="6" cy="6" r="4"/><path d="M9 9l3.500 3.500"/></svg>Search students...</div>
<svg style="position:absolute;left:1082px;top:8.6px" width="24" height="24" viewBox="0 0 24 24"><path d="M9.500 5.600A4.800 4.800 0 0 0 5.800 10.300V14.400L4.200 16.300V17H15.200V16.300L13.600 14.400V12.500" fill="none" stroke="#222" stroke-width="1.500" stroke-linejoin="round"/><path d="M8.400 18.200h2.600a1.300 1.300 0 0 1-2.600 0z" fill="#222"/><circle cx="14.300" cy="6.400" r="5.400" fill="#c0391f"/></svg>
<span style="position:absolute;left:1093.300px;top:10px;font-size:8.500px;line-height:10px;font-weight:700;color:#e8e0dc">1</span>
<svg style="position:absolute;left:1119.500px;top:12.800px" width="18" height="18" viewBox="0 0 24 24" fill="#222"><path d="M11 18h2v-2h-2v2zm1-16C6.480 2 2 6.480 2 12s4.480 10 10 10 10-4.480 10-10S17.520 2 12 2zm0 18c-4.410 0-8-3.590-8-8s3.590-8 8-8 8 3.590 8 8-3.590 8-8 8zm0-14c-2.210 0-4 1.790-4 4h2c0-1.100.9-2 2-2s2 .9 2 2c0 2-3 1.750-3 5h2c0-2.250 3-2.500 3-5 0-2.210-1.790-4-4-4z"/></svg>
<svg style="position:absolute;left:1156.500px;top:12.500px" width="18" height="18" viewBox="0 0 24 24" fill="none" stroke="#222" stroke-width="2" stroke-linejoin="round"><path d="M8 4.500V3.500A1 1 0 0 1 9 2.500H20.500A1 1 0 0 1 21.500 3.500V12.500A1 1 0 0 1 20.500 13.500H19.500"/><path d="M3 7.500A1 1 0 0 1 4 6.500H15A1 1 0 0 1 16 7.500V15.500A1 1 0 0 1 15 16.500H8.500L5 20V16.500H4A1 1 0 0 1 3 15.500Z"/></svg>
<div class="tsep"></div>
<svg style="position:absolute;left:1216px;top:7px" width="33" height="33" viewBox="0 0 33 33"><circle cx="16.500" cy="16.500" r="16.300" fill="#386d93"/><path d="M16.500 6.500c-3.100 0-5 2.300-5 5.200 0 2.300.9 4 2.200 5 .2 1.500-.3 2.600-1.700 3.200-2.400.9-4.700 1.600-5.300 3 .1.900.8 1.500 1.800 1.500h16c1 0 1.700-.6 1.800-1.500-.6-1.400-2.900-2.100-5.300-3-1.400-.6-1.900-1.700-1.700-3.200 1.300-1 2.200-2.700 2.200-5 0-2.900-1.900-5.200-5-5.200z" fill="#b8b8b8"/></svg>
<span class="uname">Ryan Lee</span>
</div>
<div class="phead">
<svg style="position:absolute;left:21.500px;top:12.500px" width="28.500" height="28.500" viewBox="0 0 24 24" fill="#141414"><path d="M11 7h2v2h-2zm0 4h2v6h-2zm1-9C6.480 2 2 6.480 2 12s4.480 10 10 10 10-4.480 10-10S17.520 2 12 2zm0 18c-4.410 0-8-3.590-8-8s3.590-8 8-8 8 3.590 8 8-3.590 8-8 8z"/></svg>
<div class="crumb">SETUP<svg viewBox="0 0 19 8" fill="none" stroke="#3a3a3a" stroke-width="1.800"><path d="M7.500 .600 11 4 7.500 7.400"/></svg>SETTINGS</div>
<div class="ptitle">Company Information</div>
</div>
<div class="card1">
<div class="h">General Information</div>
<div class="f" style="left:13px;top:55px"><span class="l">Company Name</span><span class="v">Equator College</span></div>
<div class="f" style="left:13px;top:100px"><span class="l">Subscription Expiry Date</span><span class="v">31/12/2030</span></div>
<div class="f" style="left:657px;top:100px"><span class="l">Licences</span><span class="v">10</span></div>
<div class="f" style="left:13px;top:146px"><span class="l">Documents Storage</span><span class="v">450.7 MB</span></div>
<div class="f" style="left:13px;top:191px"><span class="l">Timezone</span><span class="v">Australia/Sydney</span></div>
<div class="f" style="left:657px;top:191px"><span class="l">Company Default Locale</span><span class="v">English (Australia)</span></div>
<div class="f" style="left:13px;top:236px"><span class="l">eBECAS Classic App Installer <svg width="9" height="9" viewBox="0 0 24 24" fill="#444" style="vertical-align:0"><path d="M11 7h2v2h-2zm0 4h2v6h-2zm1-9C6.480 2 2 6.480 2 12s4.480 10 10 10 10-4.480 10-10S17.520 2 12 2zm0 18c-4.410 0-8-3.590-8-8s3.590-8 8-8 8 3.590 8 8-3.590 8-8 8z"/></svg></span><span class="v"><span style="position:absolute;left:-3px"><span class="blur" style="width:222px"><b></b></span></span><span style="margin-left:221px">&nbsp;[<a>Download</a>]</span></span></div>
<div class="f" style="left:657px;top:236px"><span class="l">eBECAS Classic App Updater <svg width="9" height="9" viewBox="0 0 24 24" fill="#444" style="vertical-align:0"><path d="M11 7h2v2h-2zm0 4h2v6h-2zm1-9C6.480 2 2 6.480 2 12s4.480 10 10 10 10-4.480 10-10S17.520 2 12 2zm0 18c-4.410 0-8-3.590-8-8s3.590-8 8-8 8 3.590 8 8-3.590 8-8 8z"/></svg></span><span class="v"><span style="position:absolute;left:0"><span class="blur" style="width:268px"><b></b></span></span><span style="margin-left:268px"><a>Download</a>]</span></span></div>
</div>
<div class="foot"><span style="left:384px">Provided with</span><svg style="position:absolute;left:452px;top:8px" width="12" height="11" viewBox="0 0 24 22" fill="#a83226"><path d="M12 21.350l-1.450-1.320C5.400 15.360 2 12.280 2 8.500 2 5.420 4.420 3 7.500 3c1.740 0 3.410.81 4.500 2.090C13.090 3.810 14.760 3 16.500 3 19.580 3 22 5.420 22 8.500c0 3.780-3.400 6.860-8.550 11.540L12 21.350z"/></svg><span style="left:466px">by Equator IT in</span>
<svg style="position:absolute;left:544px;top:7px" width="25" height="13" viewBox="0 0 50 26"><rect width="50" height="26" fill="#1f2a6e"/><path d="M0 0L25 13M25 0L0 13" stroke="#ddd" stroke-width="3"/><path d="M0 0L25 13M25 0L0 13" stroke="#b8342c" stroke-width="1.200"/><path d="M12.500 0V13M0 6.500H25" stroke="#ddd" stroke-width="4.500"/><path d="M12.500 0V13M0 6.500H25" stroke="#b8342c" stroke-width="2.500"/><circle cx="12.500" cy="19.500" r="2.600" fill="#ddd"/><circle cx="37" cy="5" r="1.500" fill="#ddd"/><circle cx="44" cy="10" r="1.500" fill="#ddd"/><circle cx="32" cy="12" r="1.500" fill="#ddd"/><circle cx="38" cy="21" r="1.500" fill="#ddd"/><circle cx="41" cy="14.500" r="1" fill="#ddd"/></svg>
<span style="left:572px">| Copyright © 2026. All right reserved.</span></div>
</div>
<div class="hl">
<div class="card2">
<div class="h">Backups</div>
<div class="g">
<div class="r hd" style="top:0;height:27px;line-height:29px"><span>Date</span><svg style="position:absolute;left:849px;top:8px" width="7" height="11" viewBox="0 0 7 11" fill="none" stroke="#555" stroke-width="1"><path d="M3.500 0V10M1.500 8l2 2 2-2"/></svg><span style="left:870px">Status</span></div>
<div class="r" style="top:27px;height:28px;line-height:28px"><span>19/02/2026 02:03 AM</span><i>OK</i></div>
<div class="r o" style="top:55px;height:27px;line-height:28px"><span>18/02/2026 02:02 AM</span><i>OK</i></div>
<div class="r" style="top:82px;height:28px;line-height:28px"><span>17/02/2026 02:04 AM</span><i>OK</i></div>
<div class="r o" style="top:110px;height:27px;line-height:28px"><span>16/02/2026 02:03 AM</span><i>OK</i></div>
<div class="r" style="top:137px;height:28px;line-height:28px"><span>15/02/2026 02:02 AM</span><i>OK</i></div>
<div class="r o" style="top:165px;height:27px;line-height:28px"><span>14/02/2026 02:02 AM</span><i>OK</i></div>
<div class="r" style="top:192px;height:28px;line-height:28px"><span>13/02/2026 02:02 AM</span><i>OK</i></div>
<div class="r o" style="top:220px;height:28px;line-height:28px"><span>12/02/2026 02:06 AM</span><i>OK</i></div>
<div class="r" style="top:248px;height:27px;line-height:28px"><span>11/02/2026 02:07 AM</span><i>OK</i></div>
<div class="r o" style="top:275px;height:28px;line-height:28px"><span>10/02/2026 02:06 AM</span><i>OK</i></div>
<div class="r" style="top:303px;height:27px;line-height:28px"><span>09/02/2026 02:02 AM</span><i>OK</i></div>
<div class="r o" style="top:330px;height:28px;line-height:28px"><span>08/02/2026 02:01 AM</span><i>OK</i></div>
<div class="r" style="top:358px;height:27px;line-height:28px"><span>07/02/2026 02:02 AM</span><i>OK</i></div>
<div class="r o" style="top:385px;height:28px;line-height:28px"><span>06/02/2026 02:02 AM</span><i>OK</i></div>
<div class="vl"></div>
</div>
<div class="pgb" style="left:12.500px;width:27.500px">50</div>
<div class="pg" style="left:1088px">Page 1 of 1 (14 items)</div>
<svg style="position:absolute;left:1208px;top:469px" width="10" height="14" viewBox="0 0 10 14" fill="none" stroke="#999" stroke-width="1.300"><path d="M7.500 1.500 2.500 7l5 5.500"/></svg>
<div class="pgb" style="left:1230px;width:22px">1</div>
<svg style="position:absolute;left:1261px;top:469px" width="10" height="14" viewBox="0 0 10 14" fill="none" stroke="#999" stroke-width="1.300"><path d="M2.500 1.500 7.500 7l-5 5.500"/></svg>
</div>
</div>
<div class="sshade"></div>

<div class="side">
<div class="brand">
<svg style="left:0;top:0" width="66" height="47" viewBox="0 0 66 47" fill="none" stroke="#c6c6c6" stroke-width="3.100" stroke-linecap="round" stroke-linejoin="round">
<path d="M34.600 11 L36.400 9.700 Q38.200 8.600 40 9.900 L48.700 17.700"/>
<path d="M50.700 19.700 Q53.300 22.700 50.300 26.300" stroke="#6a6a6a"/>
<path d="M48.100 28.700 L41 35.500 Q39.200 36.900 37.400 35.500 L28.500 28.300" stroke="#adadad"/>
<path d="M32.900 13.200 L25.800 20.900 Q24.100 23 25.500 25.200 L26.200 26.300"/>
<path d="M35.700 19.600 A4.600 4.600 0 1 1 36.500 27"/>
<path d="M28.800 20.200 L33.200 24.200"/>
</svg>
<span class="name">eBECAS</span>
<svg style="left:166px;top:15px" width="16" height="14" viewBox="0 0 16 14" fill="none" stroke="#d0d0d0" stroke-width="1.7" stroke-linecap="butt"><path d="M2 1.5v11M14.5 7H5.5M9.6 2.6 5.2 7l4.4 4.4"/></svg>
</div>
<div class="smenu">Search Menu</div>
<div class="mi" style="top:97px"><svg viewBox="0 0 24 24"><path d="M3 13h8V3H3v10zm0 8h8v-6H3v6zm10 0h8V11h-8v10zm0-18v6h8V3h-8z"/></svg>Dashboard</div>
<div class="mi" style="top:135px"><svg viewBox="0 0 24 24"><path d="M3 17v2h6v-2H3zM3 5v2h10V5H3zm10 16v-2h8v-2h-8v-2h-2v6h2zM7 9v2H3v2h4v2h2V9H7zm14 4v-2H11v2h10zm-6-4h2V7h4V5h-4V3h-2v6z"/></svg>Utilities Home</div>
<div class="mi" style="top:174px"><svg viewBox="0 0 24 24"><path d="M21.9 8.89l-1.05-4.37c-.22-.9-1-1.52-1.91-1.52H5.05c-.9 0-1.69.63-1.9 1.52L2.1 8.89c-.24 1.02-.02 2.06.62 2.88.08.11.19.19.28.29V19c0 1.1.9 2 2 2h14c1.1 0 2-.9 2-2v-6.94c.09-.09.2-.18.28-.28.64-.82.87-1.87.62-2.890zm-2.990-3.900l1.050 4.370c.1.420.01.840-.25 1.170-.14.180-.44.470-.94.470-.61 0-1.140-.49-1.210-1.140L16.980 5l1.930-.01zM13 5h1.960l.54 4.520c.05.390-.07.780-.33 1.070-.22.260-.54.410-.95.410-.67 0-1.220-.59-1.220-1.310V5zM8.490 9.520L9.040 5H11v4.690c0 .72-.55 1.310-1.290 1.310-.34 0-.65-.15-.89-.41-.25-.29-.37-.68-.33-1.070zm-4.450-.16L5.050 5h1.970l-.58 4.860c-.08.650-.6 1.140-1.210 1.140-.49 0-.8-.29-.93-.47-.27-.32-.36-.75-.26-1.170zM5 19v-6.030c.08.010.15.030.23.030.87 0 1.660-.36 2.240-.95.600.6 1.400.95 2.310.95.870 0 1.650-.360 2.230-.930.590.570 1.390.930 2.290.930.840 0 1.640-.350 2.240-.950.580.590 1.370.950 2.240.950.080 0 .150-.020.230-.030V19h-3v-4h-6v4H5zm6 0v-2.200h2V19h-2z"/></svg>Apps</div>
<div class="mi" style="top:212px"><svg viewBox="0 0 24 24"><path d="M12 1.700 3 6.900v10.200l9 5.200 9-5.200V6.900l-9-5.200zm0 2.300 5.900 3.400L12 10.850 6.100 7.400 12 4zM5 9.100l6 3.500v6.850l-6-3.500V9.100zm8 10.350V12.600l6-3.500v6.850l-6 3.500z"/></svg>Object Manager</div>
<div class="mi" style="top:250px"><svg viewBox="0 0 24 24"><path d="M8 3v2h11a1 1 0 0 1 1 1v9h2V6a3 3 0 0 0-3-3H8z"/><path d="M4 7a2 2 0 0 0-2 2v10a2 2 0 0 0 2 2h12a2 2 0 0 0 2-2V9a2 2 0 0 0-2-2H4zm0 5h12v7H4v-7z"/></svg>Templates<svg class="chev" viewBox="0 0 12 12"><path d="M8 1.500 3.500 6 8 10.500"/></svg></div>
<div class="mi" style="top:288px"><svg viewBox="0 0 24 24"><path d="M3 13h2v-2H3v2zm0 4h2v-2H3v2zm0-8h2V7H3v2zm4 4h14v-2H7v2zm0 4h14v-2H7v2zM7 7v2h14V7H7z"/></svg>Picklists</div>
<div class="mi" style="top:327px"><svg viewBox="0 0 24 24"><path d="M15 9H9v6h6V9zm-2 4h-2v-2h2v2zm8-2V9h-2V7c0-1.100-.9-2-2-2h-2V3h-2v2h-2V3H9v2H7c-1.100 0-2 .9-2 2v2H3v2h2v2H3v2h2v2c0 1.100.9 2 2 2h2v2h2v-2h2v2h2v-2h2c1.100 0 2-.9 2-2v-2h2v-2h-2v-2h2zm-4 6H7V7h10v10z"/></svg>Processes</div>
<div class="mi" style="top:365px"><svg viewBox="0 0 24 24"><path d="M18 8h-1V6c0-2.760-2.240-5-5-5S7 3.240 7 6v2H6c-1.100 0-2 .9-2 2v10c0 1.100.9 2 2 2h12c1.100 0 2-.9 2-2V10c0-1.100-.9-2-2-2zM9 6c0-1.660 1.340-3 3-3s3 1.340 3 3v2H9V6zm9 14h-4.500v-3.300a2.300 2.300 0 1 0-3 0V20H6V10h12v10z"/></svg>Security<svg class="chev" viewBox="0 0 12 12"><path d="M8 1.500 3.500 6 8 10.500"/></svg></div>
<div class="mi" style="top:403px"><svg viewBox="0 0 24 24"><path d="M12 2 7.500 6H4a2 2 0 0 0-2 2v11a2 2 0 0 0 2 2h16a2 2 0 0 0 2-2V8a2 2 0 0 0-2-2h-3.500L12 2zm0 2.700L15.700 8H20v11h-2.500v-4.500L15 12.200V19H9v-6.800l-2.500 2.300V19H4V8h4.300L12 4.700z"/><circle cx="12" cy="9.500" r="1.700"/><rect x="10.500" y="14" width="3" height="5"/><rect x="5.500" y="15" width="2.200" height="2.200"/><rect x="16.300" y="15" width="2.200" height="2.200"/></svg>Institution Setup<svg class="chev" viewBox="0 0 12 12"><path d="M8 1.500 3.500 6 8 10.500"/></svg></div>
<div class="mi" style="top:442px;background:#2f2f2f;color:#cdcdcd;line-height:36.500px"><svg viewBox="0 0 24 24"><path d="M19.140 12.940c.04-.3.060-.61.060-.94 0-.32-.02-.64-.07-.94l2.030-1.580c.18-.14.23-.41.120-.61l-1.920-3.320c-.12-.22-.37-.29-.59-.22l-2.390.96c-.5-.38-1.030-.7-1.620-.94l-.36-2.540c-.04-.24-.24-.41-.48-.41h-3.840c-.24 0-.43.17-.47.41l-.36 2.540c-.59.24-1.130.57-1.620.94l-2.390-.96c-.22-.08-.47 0-.59.22L2.740 8.870c-.12.21-.08.47.12.61l2.030 1.580c-.05.3-.09.63-.09.94s.02.64.07.94l-2.030 1.580c-.18.14-.23.41-.12.61l1.920 3.320c.12.22.37.29.59.22l2.390-.96c.5.38 1.030.7 1.620.94l.36 2.540c.05.24.24.41.48.41h3.840c.24 0 .44-.17.47-.41l.36-2.540c.59-.24 1.130-.56 1.620-.94l2.390.96c.22.08.47 0 .59-.22l1.920-3.320c.12-.22.070-.47-.12-.61l-2.010-1.580zM12 15.600c-1.980 0-3.600-1.620-3.600-3.600s1.620-3.600 3.600-3.600 3.600 1.620 3.600 3.600-1.620 3.600-3.600 3.600z"/></svg>Settings<svg class="chev" viewBox="0 0 12 12" style="right:9px"><path d="M1.800 4 6 8.200 10.200 4"/></svg></div>
<div class="sub">
<div class="si" style="top:5px"><svg viewBox="0 0 24 24"><path d="M4 6H2v14a2 2 0 0 0 2 2h14v-2H4V6z"/><path d="M20 2H8a2 2 0 0 0-2 2v12a2 2 0 0 0 2 2h12a2 2 0 0 0 2-2V4a2 2 0 0 0-2-2zm-6 2.500a2.500 2.500 0 1 1 0 5 2.500 2.500 0 0 1 0-5zM19 15H9v-1.500c0-1.660 3.340-2.500 5-2.500s5 .84 5 2.500V15z"/></svg>Students</div>
<div class="si" style="top:39px"><svg viewBox="0 0 24 24"><path d="M9 2v2h10a1 1 0 0 1 1 1v10h2V5a3 3 0 0 0-3-3H9z"/><path d="M4 6a2 2 0 0 0-2 2v12a2 2 0 0 0 2 2h12a2 2 0 0 0 2-2V8a2 2 0 0 0-2-2H4zm2 5h8v2H6v-2zm0 4h8v2H6v-2z"/></svg>Offers</div>
<div class="si" style="top:72px"><svg viewBox="0 0 24 24"><path d="M3 2h18v2h-2v18H5V4H3V2zm4 2v16h10V4H7z"/><path d="M11.300 6h1.500v1.100c1.200.2 2.100 1 2.200 2.200h-1.500c-.1-.6-.6-1-1.400-1-.8 0-1.300.4-1.300.9 0 .5.400.8 1.600 1.100 1.700.4 2.800 1 2.800 2.500 0 1.200-.9 2-2.300 2.200V16.200h-1.500V15c-1.400-.2-2.400-1.100-2.500-2.500h1.500c.1.800.7 1.200 1.700 1.200s1.500-.4 1.500-1c0-.6-.4-.9-1.700-1.200-1.700-.4-2.700-1.100-2.700-2.400 0-1.100.9-1.900 2.200-2.100V6z"/></svg>Finance</div>
<div class="si" style="top:106px"><svg viewBox="0 0 24 24"><path d="M10 16v-1H3.010L3 19c0 1.110.89 2 2 2h14c1.110 0 2-.89 2-2v-4h-7v1h-4zm10-9h-4.010V5l-2-2h-4l-2 2v2H4c-1.100 0-2 .9-2 2v3c0 1.110.89 2 2 2h6v-2h4v2h6c1.100 0 2-.9 2-2V9c0-1.100-.9-2-2-2zm-6 0h-4V5h4v2z"/></svg>Agents</div>
<div class="si" style="top:140px"><svg viewBox="0 0 24 24"><path d="M12 1 3 5v6c0 5.550 3.840 10.740 9 12 5.160-1.260 9-6.450 9-12V5l-9-4zm0 10.990h7c-.53 4.120-3.280 7.790-7 8.940V12H5V6.300l7-3.110v8.800z"/></svg>Security</div>
<div class="si" style="top:173px"><svg viewBox="0 0 24 24"><path d="M8 3v2h11a1 1 0 0 1 1 1v9h2V6a3 3 0 0 0-3-3H8z"/><path d="M4 7a2 2 0 0 0-2 2v10a2 2 0 0 0 2 2h12a2 2 0 0 0 2-2V9a2 2 0 0 0-2-2H4zm0 5h12v7H4v-7z"/></svg>Templates</div>
<div class="si" style="top:207px"><svg viewBox="0 0 24 24"><path d="M12 22C6.490 22 2 17.510 2 12S6.490 2 12 2s10 4.040 10 9c0 3.310-2.690 6-6 6h-1.770c-.28 0-.5.220-.5.500 0 .12.050.23.130.33.410.47.640 1.060.640 1.670A2.500 2.500 0 0 1 12 22zm0-18c-4.410 0-8 3.590-8 8s3.590 8 8 8c.28 0 .5-.22.5-.5a.54.54 0 0 0-.14-.35c-.41-.46-.63-1.050-.63-1.650a2.500 2.500 0 0 1 2.500-2.500H16c2.210 0 4-1.790 4-4 0-3.860-3.590-7-8-7z"/><circle cx="6.500" cy="11.500" r="1.500"/><circle cx="9.500" cy="7.500" r="1.500"/><circle cx="14.500" cy="7.500" r="1.500"/><circle cx="17.500" cy="11.500" r="1.500"/></svg>Branding</div>
<div class="si act" style="top:241px"><svg viewBox="0 0 24 24"><path d="M11 7h2v2h-2zm0 4h2v6h-2zm1-9C6.480 2 2 6.480 2 12s4.480 10 10 10 10-4.480 10-10S17.520 2 12 2zm0 18c-4.410 0-8-3.590-8-8s3.590-8 8-8 8 3.590 8 8-3.590 8-8 8z"/></svg>Company Information</div>
</div>

</div>
</div>
</body>
</html>
